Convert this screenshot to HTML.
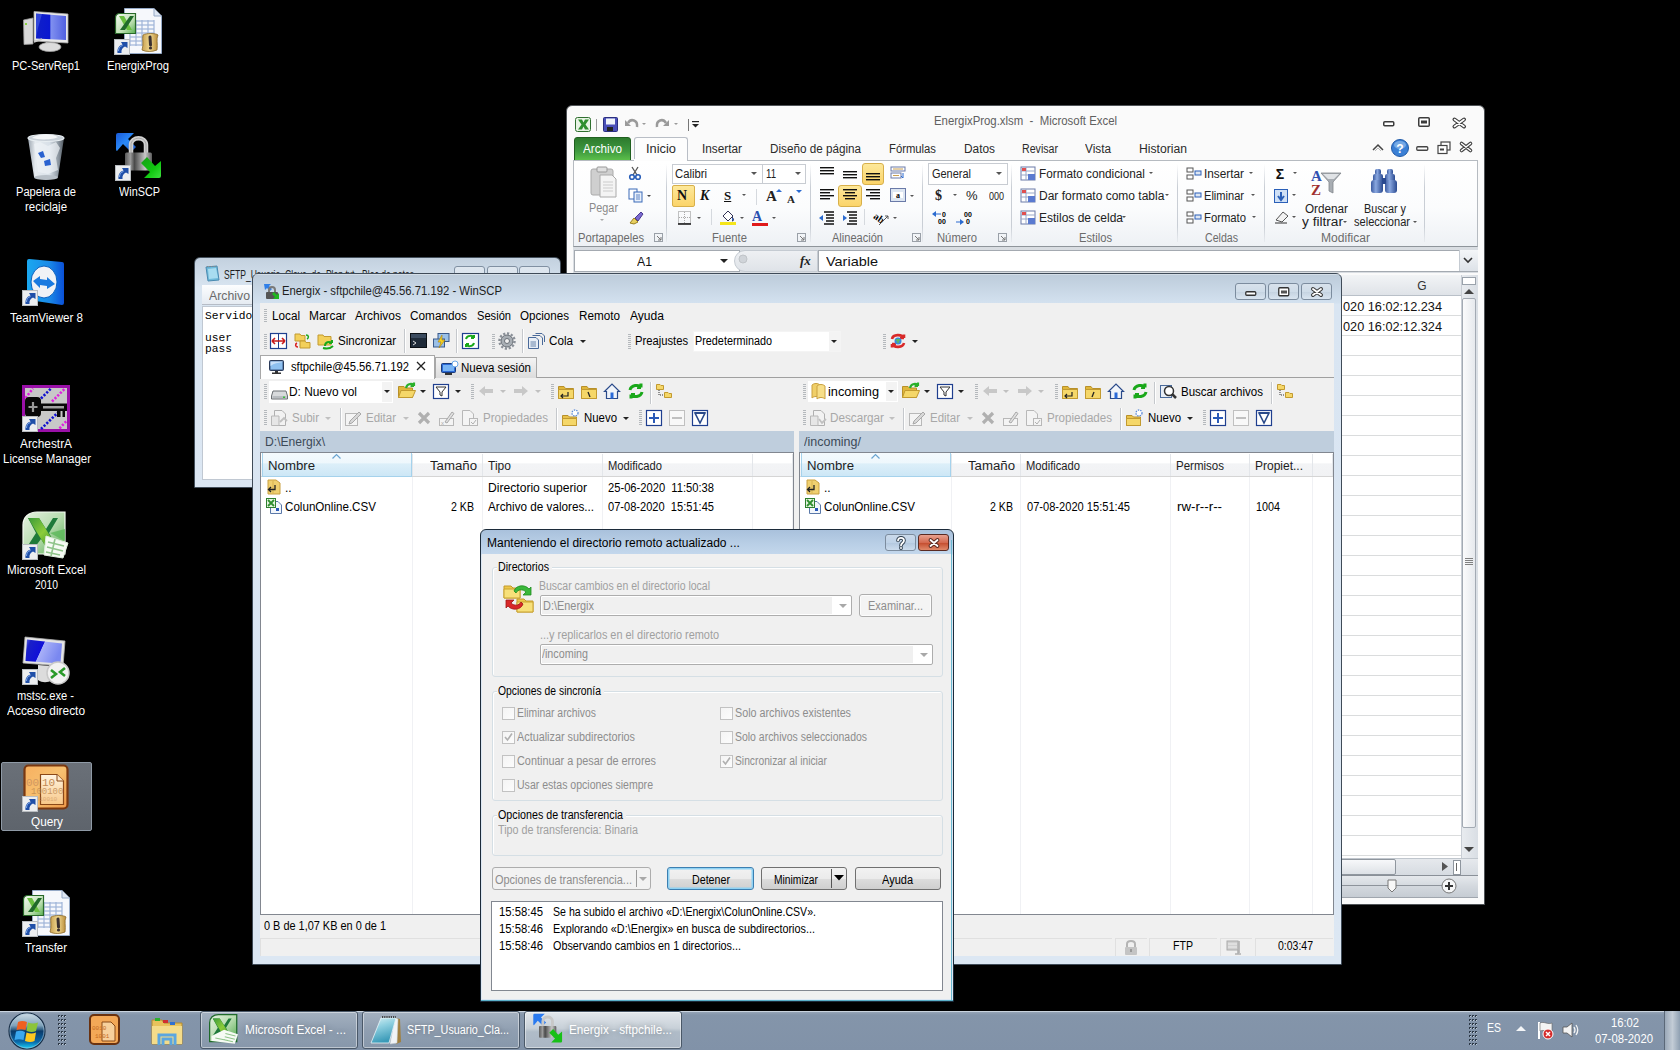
<!DOCTYPE html><html><head><meta charset="utf-8"><style>
html,body{margin:0;padding:0;background:#000;width:1680px;height:1050px;overflow:hidden;position:relative;font-family:"Liberation Sans", sans-serif;font-size:12px}
.a{position:absolute}
.t{position:absolute;white-space:pre;transform-origin:0 50%}
svg.a{overflow:visible}
</style></head><body><svg class="a" style="left:20px;top:8px;" width="52" height="46" viewBox="0 0 52 46"><defs><linearGradient id="pcscr" x1="0" y1="0" x2="1" y2="0"><stop offset="0" stop-color="#1020c8"/><stop offset="0.45" stop-color="#0a18d0"/><stop offset="0.5" stop-color="#8090f0"/><stop offset="1" stop-color="#5060e0"/></linearGradient></defs><path d="M3.5 12 L13 10 L13 36 L4 36.5Z" fill="#d8d8d8" stroke="#9a9a9a" stroke-width="0.8"/><rect x="5" y="15" width="2" height="2" fill="#8ad040"/><path d="M14 3.5 L48 6 L48 35 L14 33Z" fill="#e8e8e8" stroke="#a8a8a8" stroke-width="0.8"/><path d="M16 5.5 L46 8 L46 32 L16 30.5Z" fill="url(#pcscr)"/><path d="M18 20 L22 6 L16 6 L16 30 Z" fill="#6f8ff8" opacity="0.35"/><path d="M26 34 L36 35 L37 38 L25 37Z" fill="#cfcfcf"/><ellipse cx="30" cy="39" rx="11" ry="4.5" fill="#dcdcdc" stroke="#a0a0a0" stroke-width="0.8"/><path d="M14 34 L22 31" stroke="#ccc" stroke-width="1.5"/></svg><svg class="a" style="left:114px;top:6px;" width="48" height="50" viewBox="0 0 48 50"><defs><linearGradient id="xbd" x1="0" y1="0" x2="1" y2="1"><stop offset="0" stop-color="#f4faf2"/><stop offset="0.6" stop-color="#bfe0b4"/><stop offset="1" stop-color="#58b050"/></linearGradient><linearGradient id="scr" x1="0" y1="0" x2="1" y2="0"><stop offset="0" stop-color="#c8a050"/><stop offset="0.5" stop-color="#f0d890"/><stop offset="1" stop-color="#b88a38"/></linearGradient></defs><path d="M10.5 2.5 H40 L47.5 10 V47.5 H10.5Z" fill="#f6f8fc" stroke="#95a9c6"/><path d="M40 2.5 V10 H47.5" fill="#dfe7f3" stroke="#95a9c6"/><path d="M16 15 H40" stroke="#9fb4d8" stroke-width="1.2"/><path d="M16 19 H40" stroke="#9fb4d8" stroke-width="1.2"/><path d="M16 23 H40" stroke="#9fb4d8" stroke-width="1.2"/><path d="M16 27 H40" stroke="#9fb4d8" stroke-width="1.2"/><path d="M16 31 H40" stroke="#9fb4d8" stroke-width="1.2"/><path d="M16 35 H40" stroke="#9fb4d8" stroke-width="1.2"/><path d="M16 39 H40" stroke="#9fb4d8" stroke-width="1.2"/><path d="M16 14 V40" stroke="#9fb4d8" stroke-width="1.2"/><path d="M22 14 V40" stroke="#9fb4d8" stroke-width="1.2"/><path d="M28 14 V40" stroke="#9fb4d8" stroke-width="1.2"/><path d="M34 14 V40" stroke="#9fb4d8" stroke-width="1.2"/><path d="M40 14 V40" stroke="#9fb4d8" stroke-width="1.2"/><path d="M1.5 12 Q1.5 7.5 6 7.5 H21.5 V27.5 H1.5Z" fill="url(#xbd)" stroke="#2a6a2a" stroke-width="1.2"/><path d="M5 10 H10 L18 24 H13Z" fill="#6ac040"/><path d="M16 10 H20 L11 24 H6Z" fill="#1f6a2a"/><path d="M29 29 C32 27 42 27 44 29 C42 33 44 38 43 44 C38 46 32 46 28 44 C30 38 28 33 29 29Z" fill="url(#scr)" stroke="#8a6a2a" stroke-width="0.8"/><path d="M36 31 L36.5 39" stroke="#3a3030" stroke-width="3" stroke-linecap="round"/><circle cx="36.5" cy="42" r="1.6" fill="#3a3030"/></svg><svg class="a" style="left:114px;top:39px;" width="16" height="16" viewBox="0 0 16 16"><rect x="0.5" y="0.5" width="15" height="15" fill="#eceef0" stroke="#b8bcc0"/><path d="M3.5 14 C3 9.5 5 6.5 8.5 5.5 L7 3 H13.5 V9 L11 7.5 C8.5 8.5 7 11 7.5 14Z" fill="#1f4fa8"/><path d="M4.5 12 C4.5 9 6 7 8.5 6.5" stroke="#7fa8e8" stroke-width="1" fill="none"/></svg><svg class="a" style="left:26px;top:132px;" width="40" height="50" viewBox="0 0 40 50"><defs><linearGradient id="rbg" x1="0" y1="0" x2="1" y2="0"><stop offset="0" stop-color="#9aa4ae"/><stop offset="0.2" stop-color="#e6ebf0"/><stop offset="0.6" stop-color="#d8e0e8"/><stop offset="0.85" stop-color="#8a949e"/><stop offset="1" stop-color="#505860"/></linearGradient></defs><path d="M2 6 L8 45 C12 48 28 48 32 45 L38 6Z" fill="url(#rbg)"/><path d="M8 12 L14 10 L22 14 L30 10 L34 16 L30 26 L32 38 L22 42 L12 40 L10 26Z" fill="#eef2f6" opacity="0.7"/><ellipse cx="20" cy="6" rx="18" ry="3.5" fill="#c8d0d8" stroke="#e8eef2" stroke-width="1.2"/><path d="M6 6 C10 2 26 1 32 5 C28 8 12 8 6 6Z" fill="#f4f6f8"/><ellipse cx="20" cy="45.5" rx="12" ry="2.5" fill="#b8c0c8"/><path d="M12 21 L17 19 L19 25 L15 26Z M18 29 L24 27 L25 33 L19 34Z" fill="#2a62d0"/></svg><svg class="a" style="left:114px;top:132px;" width="50" height="50" viewBox="0 0 50 50"><defs><linearGradient id="wsbody" x1="0" y1="0" x2="1" y2="0"><stop offset="0" stop-color="#5a5a5a"/><stop offset="0.2" stop-color="#9a9a9a"/><stop offset="0.35" stop-color="#4a4a4a"/><stop offset="0.55" stop-color="#8a8a8a"/><stop offset="0.75" stop-color="#c8c8c8"/><stop offset="1" stop-color="#5a5a5a"/></linearGradient><linearGradient id="wsblue" x1="0" y1="0" x2="1" y2="1"><stop offset="0" stop-color="#1a5ad8"/><stop offset="0.5" stop-color="#2a8af8"/><stop offset="1" stop-color="#1a4ab8"/></linearGradient><linearGradient id="wsgreen" x1="0" y1="0" x2="1" y2="1"><stop offset="0" stop-color="#1a9a1a"/><stop offset="0.6" stop-color="#10c810"/><stop offset="1" stop-color="#40e040"/></linearGradient></defs><path d="M2 3 Q2 1 4 1 H20 L14 7 L22 15 L17 20 L9 12 L3 19 Q2 19 2 17Z" fill="url(#wsblue)"/><path d="M17 21 V13 C17 4 32 4 32 13 V21" fill="none" stroke="#d0d0d0" stroke-width="4.5"/><path d="M17 21 V13 C17 4 32 4 32 13 V21" fill="none" stroke="#8a8a8a" stroke-width="1" opacity="0.6"/><rect x="11" y="20.5" width="27" height="18" rx="1.5" fill="url(#wsbody)"/><path d="M47 29 V44 Q47 46 45 46 H30 L36 40 L27 31 L33 25 L41 34Z" fill="url(#wsgreen)"/></svg><svg class="a" style="left:115px;top:165px;" width="16" height="16" viewBox="0 0 16 16"><rect x="0.5" y="0.5" width="15" height="15" fill="#eceef0" stroke="#b8bcc0"/><path d="M3.5 14 C3 9.5 5 6.5 8.5 5.5 L7 3 H13.5 V9 L11 7.5 C8.5 8.5 7 11 7.5 14Z" fill="#1f4fa8"/><path d="M4.5 12 C4.5 9 6 7 8.5 6.5" stroke="#7fa8e8" stroke-width="1" fill="none"/></svg><svg class="a" style="left:24px;top:258px;" width="42" height="48" viewBox="0 0 42 48"><defs><linearGradient id="tvb" x1="0" y1="0" x2="1" y2="0"><stop offset="0" stop-color="#1aa8f0"/><stop offset="0.6" stop-color="#1a8ae8"/><stop offset="1" stop-color="#0a50d8"/></linearGradient></defs><path d="M3 3 Q3 1 5 1 L38 4 Q40 4 40 6 V45 Q40 47 38 47 L5 42 Q3 42 3 40Z" fill="url(#tvb)"/><ellipse cx="20" cy="24" rx="13" ry="16" fill="#f0f2f6" stroke="#0a60c0" stroke-width="1"/><path d="M9 23 L16 18 V21 L23 22 V19 L31 26 L23 31 V28 L16 27 V30Z" fill="#1a7ae0"/></svg><svg class="a" style="left:22px;top:290px;" width="16" height="16" viewBox="0 0 16 16"><rect x="0.5" y="0.5" width="15" height="15" fill="#eceef0" stroke="#b8bcc0"/><path d="M3.5 14 C3 9.5 5 6.5 8.5 5.5 L7 3 H13.5 V9 L11 7.5 C8.5 8.5 7 11 7.5 14Z" fill="#1f4fa8"/><path d="M4.5 12 C4.5 9 6 7 8.5 6.5" stroke="#7fa8e8" stroke-width="1" fill="none"/></svg><svg class="a" style="left:22px;top:385px;" width="48" height="47" viewBox="0 0 48 47"><rect x="1.5" y="1.5" width="45" height="44" fill="#c8c8c8" stroke="#9a10a8" stroke-width="3"/><g stroke-width="2.6" stroke-dasharray="2.2 1.6" stroke-linecap="butt"><path d="M3.5 13 L11 3.5 M30 16.5 L43 3.5 M17 26 L21 22 M37.5 43.5 L45 35.5" stroke="#e020e0"/><path d="M19 13.5 L29 3.5 M19 44 L36 27.5" stroke="#1010d0"/></g><rect x="3" y="12" width="16" height="20" rx="4" fill="#080808"/><path d="M11 17 V27 M6.5 22 H15.5" stroke="#9a9a9a" stroke-width="2.2"/><rect x="18" y="18.5" width="27" height="7.5" fill="#080808"/><rect x="21" y="21" width="21" height="2.5" fill="#a0a0a0"/><rect x="35" y="25" width="8" height="7" fill="#080808"/><rect x="38.5" y="26" width="2" height="6" fill="#c8c8c8"/></svg><svg class="a" style="left:22px;top:416px;" width="16" height="16" viewBox="0 0 16 16"><rect x="0.5" y="0.5" width="15" height="15" fill="#eceef0" stroke="#b8bcc0"/><path d="M3.5 14 C3 9.5 5 6.5 8.5 5.5 L7 3 H13.5 V9 L11 7.5 C8.5 8.5 7 11 7.5 14Z" fill="#1f4fa8"/><path d="M4.5 12 C4.5 9 6 7 8.5 6.5" stroke="#7fa8e8" stroke-width="1" fill="none"/></svg><svg class="a" style="left:22px;top:511px;" width="46" height="46" viewBox="0 0 46 46"><defs><linearGradient id="xlbg" x1="0" y1="0" x2="1" y2="1"><stop offset="0" stop-color="#e6f2e2"/><stop offset="0.5" stop-color="#b8dcb0"/><stop offset="1" stop-color="#4faa4a"/></linearGradient><linearGradient id="xlx" x1="0" y1="0" x2="1" y2="1"><stop offset="0" stop-color="#3a9a3a"/><stop offset="0.5" stop-color="#8ccc3a"/><stop offset="1" stop-color="#2a8a2a"/></linearGradient></defs><path d="M1 14 C1 6 7 1 15 1 H43 V43 H1Z" fill="url(#xlbg)" stroke="#f4fbf2" stroke-width="1.2"/><path d="M28 22 L43 18 V30Z" fill="#5cb85a" opacity="0.8"/><path d="M6 7 H17 L24 18 L31 7 H36 L27 22 L35 36 H24 L19 28 L13 36 H5 L14 22Z" fill="#1f7a3a"/><path d="M6 7 H17 L35 36 H24Z" fill="url(#xlx)"/><path d="M24 25 L46 32 L41 47 L22 44Z" fill="#f6fbf4" stroke="#dfeedd"/><path d="M26 31 L42 35 M25 36 L41 40 M24 41 L38 44 M33 28 L29 45" stroke="#8fc48a" stroke-width="1.6"/></svg><svg class="a" style="left:22px;top:544px;" width="16" height="16" viewBox="0 0 16 16"><rect x="0.5" y="0.5" width="15" height="15" fill="#eceef0" stroke="#b8bcc0"/><path d="M3.5 14 C3 9.5 5 6.5 8.5 5.5 L7 3 H13.5 V9 L11 7.5 C8.5 8.5 7 11 7.5 14Z" fill="#1f4fa8"/><path d="M4.5 12 C4.5 9 6 7 8.5 6.5" stroke="#7fa8e8" stroke-width="1" fill="none"/></svg><svg class="a" style="left:22px;top:636px;" width="48" height="52" viewBox="0 0 48 52"><defs><linearGradient id="msscr" x1="0" y1="0" x2="1" y2="0.3"><stop offset="0" stop-color="#6a70e0"/><stop offset="0.15" stop-color="#1a20c8"/><stop offset="0.5" stop-color="#1010d8"/><stop offset="0.52" stop-color="#a8b0f8"/><stop offset="1" stop-color="#7a88f0"/></linearGradient></defs><path d="M3 1 L43 5 L41 30 L1 27Z" fill="#e4e4e4" stroke="#b0b0b0" stroke-width="0.8"/><path d="M5 3.5 L40 7.5 L38.5 27.5 L3.5 25Z" fill="url(#msscr)"/><path d="M16 29 L30 30 V44 C26 47 20 47 16 44Z" fill="#dcdcdc"/><circle cx="36" cy="37" r="11" fill="#f2f2f2" stroke="#c8c8c8" stroke-width="1.5"/><path d="M29 34 L34 38 L29 42 M43 32 L38 36 L43 40" stroke="#2a9a2a" stroke-width="2.6" fill="none"/></svg><svg class="a" style="left:22px;top:669px;" width="16" height="16" viewBox="0 0 16 16"><rect x="0.5" y="0.5" width="15" height="15" fill="#eceef0" stroke="#b8bcc0"/><path d="M3.5 14 C3 9.5 5 6.5 8.5 5.5 L7 3 H13.5 V9 L11 7.5 C8.5 8.5 7 11 7.5 14Z" fill="#1f4fa8"/><path d="M4.5 12 C4.5 9 6 7 8.5 6.5" stroke="#7fa8e8" stroke-width="1" fill="none"/></svg><div class="a" style="left:1px;top:762px;width:91px;height:69px;background:linear-gradient(#6a7078,#5e646c);border:1px solid #8f9aa6;box-sizing:border-box;border-radius:2px"></div><svg class="a" style="left:22px;top:763px;" width="48" height="48" viewBox="0 0 48 48"><defs><linearGradient id="qbg" x1="0" y1="0" x2="1" y2="1"><stop offset="0" stop-color="#f8b060"/><stop offset="0.5" stop-color="#f6c070"/><stop offset="1" stop-color="#ee9848"/></linearGradient><linearGradient id="qpp" x1="0" y1="0" x2="0" y2="1"><stop offset="0" stop-color="#fff4e0"/><stop offset="1" stop-color="#f8c888"/></linearGradient></defs><rect x="2.5" y="2.5" width="43" height="43" rx="4" fill="url(#qbg)" stroke="#7a3810" stroke-width="2.2"/><text x="4" y="23" font-size="11" fill="#c89060" font-family="Liberation Mono" opacity="0.8">0010</text><path d="M18.5 11.5 H35 L41.5 18 V41.5 H18.5Z" fill="url(#qpp)" stroke="#8a4818" stroke-width="1.2"/><path d="M35 11.5 V18 H41.5" fill="#fde8c8" stroke="#8a4818" stroke-width="1"/><text x="20" y="23" font-size="11" fill="#b87840" font-family="Liberation Mono" opacity="0.85">10</text><text x="9" y="31" font-size="9" fill="#c08a50" font-family="Liberation Mono" opacity="0.8">100100</text><text x="10" y="38" font-size="6" fill="#c89060" font-family="Liberation Mono" opacity="0.6">0010010</text></svg><svg class="a" style="left:22px;top:796px;" width="16" height="16" viewBox="0 0 16 16"><rect x="0.5" y="0.5" width="15" height="15" fill="#eceef0" stroke="#b8bcc0"/><path d="M3.5 14 C3 9.5 5 6.5 8.5 5.5 L7 3 H13.5 V9 L11 7.5 C8.5 8.5 7 11 7.5 14Z" fill="#1f4fa8"/><path d="M4.5 12 C4.5 9 6 7 8.5 6.5" stroke="#7fa8e8" stroke-width="1" fill="none"/></svg><svg class="a" style="left:22px;top:888px;" width="48" height="50" viewBox="0 0 48 50"><defs><linearGradient id="xbd" x1="0" y1="0" x2="1" y2="1"><stop offset="0" stop-color="#f4faf2"/><stop offset="0.6" stop-color="#bfe0b4"/><stop offset="1" stop-color="#58b050"/></linearGradient><linearGradient id="scr" x1="0" y1="0" x2="1" y2="0"><stop offset="0" stop-color="#c8a050"/><stop offset="0.5" stop-color="#f0d890"/><stop offset="1" stop-color="#b88a38"/></linearGradient></defs><path d="M10.5 2.5 H40 L47.5 10 V47.5 H10.5Z" fill="#f6f8fc" stroke="#95a9c6"/><path d="M40 2.5 V10 H47.5" fill="#dfe7f3" stroke="#95a9c6"/><path d="M16 15 H40" stroke="#9fb4d8" stroke-width="1.2"/><path d="M16 19 H40" stroke="#9fb4d8" stroke-width="1.2"/><path d="M16 23 H40" stroke="#9fb4d8" stroke-width="1.2"/><path d="M16 27 H40" stroke="#9fb4d8" stroke-width="1.2"/><path d="M16 31 H40" stroke="#9fb4d8" stroke-width="1.2"/><path d="M16 35 H40" stroke="#9fb4d8" stroke-width="1.2"/><path d="M16 39 H40" stroke="#9fb4d8" stroke-width="1.2"/><path d="M16 14 V40" stroke="#9fb4d8" stroke-width="1.2"/><path d="M22 14 V40" stroke="#9fb4d8" stroke-width="1.2"/><path d="M28 14 V40" stroke="#9fb4d8" stroke-width="1.2"/><path d="M34 14 V40" stroke="#9fb4d8" stroke-width="1.2"/><path d="M40 14 V40" stroke="#9fb4d8" stroke-width="1.2"/><path d="M1.5 12 Q1.5 7.5 6 7.5 H21.5 V27.5 H1.5Z" fill="url(#xbd)" stroke="#2a6a2a" stroke-width="1.2"/><path d="M5 10 H10 L18 24 H13Z" fill="#6ac040"/><path d="M16 10 H20 L11 24 H6Z" fill="#1f6a2a"/><path d="M29 29 C32 27 42 27 44 29 C42 33 44 38 43 44 C38 46 32 46 28 44 C30 38 28 33 29 29Z" fill="url(#scr)" stroke="#8a6a2a" stroke-width="0.8"/><path d="M36 31 L36.5 39" stroke="#3a3030" stroke-width="3" stroke-linecap="round"/><circle cx="36.5" cy="42" r="1.6" fill="#3a3030"/></svg><svg class="a" style="left:22px;top:921px;" width="16" height="16" viewBox="0 0 16 16"><rect x="0.5" y="0.5" width="15" height="15" fill="#eceef0" stroke="#b8bcc0"/><path d="M3.5 14 C3 9.5 5 6.5 8.5 5.5 L7 3 H13.5 V9 L11 7.5 C8.5 8.5 7 11 7.5 14Z" fill="#1f4fa8"/><path d="M4.5 12 C4.5 9 6 7 8.5 6.5" stroke="#7fa8e8" stroke-width="1" fill="none"/></svg><div class="t" style="left:12.00px;top:58px;font-size:12px;line-height:16px;color:#fff;transform:scaleX(0.9186);">PC-ServRep1</div><div class="t" style="left:107.00px;top:58px;font-size:12px;line-height:16px;color:#fff;transform:scaleX(0.9389);">EnergixProg</div><div class="t" style="left:16.00px;top:184px;font-size:12px;line-height:16px;color:#fff;transform:scaleX(0.9271);">Papelera de</div><div class="t" style="left:25.00px;top:199px;font-size:12px;line-height:16px;color:#fff;transform:scaleX(0.9542);">reciclaje</div><div class="t" style="left:118.50px;top:184px;font-size:12px;line-height:16px;color:#fff;transform:scaleX(0.9043);">WinSCP</div><div class="t" style="left:9.50px;top:310px;font-size:12px;line-height:16px;color:#fff;transform:scaleX(0.9628);">TeamViewer 8</div><div class="t" style="left:20.00px;top:436px;font-size:12px;line-height:16px;color:#fff;transform:scaleX(0.9870);">ArchestrA</div><div class="t" style="left:2.50px;top:451px;font-size:12px;line-height:16px;color:#fff;transform:scaleX(0.9559);">License Manager</div><div class="t" style="left:6.50px;top:562px;font-size:12px;line-height:16px;color:#fff;transform:scaleX(0.9711);">Microsoft Excel</div><div class="t" style="left:34.50px;top:577px;font-size:12px;line-height:16px;color:#fff;transform:scaleX(0.8615);">2010</div><div class="t" style="left:17.00px;top:688px;font-size:12px;line-height:16px;color:#fff;transform:scaleX(0.9292);">mstsc.exe -</div><div class="t" style="left:6.50px;top:703px;font-size:12px;line-height:16px;color:#fff;transform:scaleX(0.9910);">Acceso directo</div><div class="t" style="left:30.50px;top:814px;font-size:12px;line-height:16px;color:#fff;transform:scaleX(0.9792);">Query</div><div class="t" style="left:24.50px;top:940px;font-size:12px;line-height:16px;color:#fff;transform:scaleX(0.9495);">Transfer</div><div class="a" style="left:566px;top:105px;width:919px;height:800px;background:#fafafa;border:1px solid #4f5357;border-radius:6px 6px 0 0;box-sizing:border-box"></div><svg class="a" style="left:575px;top:117px;" width="16" height="15" viewBox="0 0 16 15"><rect x="0.5" y="0.5" width="15" height="14" rx="2" fill="#e7f3e4" stroke="#2f6f2f"/><path d="M3 2.5 H7 L8.5 5.5 L10 2.5 H14 L10.5 7.5 L14 12.5 H10 L8.5 9.5 L7 12.5 H3 L6.5 7.5Z" fill="#2f8f2f"/></svg><div class="a" style="left:596px;top:119px;width:1px;height:12px;background:#9a9a9a"></div><svg class="a" style="left:603px;top:117px;" width="15" height="15" viewBox="0 0 15 15"><rect x="0.5" y="0.5" width="14" height="14" rx="1" fill="#4a4fb8" stroke="#2a2f80"/><rect x="3" y="1.5" width="9" height="6" fill="#f0f4fa"/><rect x="4" y="10" width="6" height="4" fill="#222"/></svg><svg class="a" style="left:625px;top:117px;" width="14" height="14" viewBox="0 0 14 14"><path d="M3 6 C6 1 13 3 12 10" stroke="#9a9a9a" stroke-width="2.5" fill="none"/><path d="M0 3 L6 9 L0 9Z" fill="#9a9a9a"/></svg><svg class="a" style="left:642px;top:123px;" width="5" height="3" viewBox="0 0 5 3"><path d="M0 0 H4 L2 2Z" fill="#9a9a9a"/></svg><svg class="a" style="left:655px;top:117px;" width="14" height="14" viewBox="0 0 14 14"><path d="M11 6 C8 1 1 3 2 10" stroke="#9a9a9a" stroke-width="2.5" fill="none"/><path d="M14 3 L8 9 L14 9Z" fill="#9a9a9a"/></svg><svg class="a" style="left:674px;top:123px;" width="5" height="3" viewBox="0 0 5 3"><path d="M0 0 H4 L2 2Z" fill="#9a9a9a"/></svg><div class="a" style="left:688px;top:119px;width:1px;height:12px;background:#777"></div><svg class="a" style="left:692px;top:119px;" width="8" height="10" viewBox="0 0 8 10"><rect x="0" y="2" width="7" height="1.2" fill="#222"/><path d="M0 5 H7 L3.5 8.5Z" fill="#222"/></svg><div class="t" style="left:934.00px;top:113px;font-size:12px;line-height:16px;color:#606060;transform:scaleX(0.9496);">EnergixProg.xlsm  -  Microsoft Excel</div><svg class="a" style="left:1383px;top:121px;" width="13" height="7" viewBox="0 0 13 7"><rect x="0.75" y="0.75" width="10" height="4" rx="1" fill="#fff" stroke="#3c3c3c" stroke-width="1.5"/></svg><svg class="a" style="left:1418px;top:117px;" width="13" height="11" viewBox="0 0 13 11"><rect x="0.75" y="0.75" width="10.5" height="8.5" rx="1" fill="#fff" stroke="#3c3c3c" stroke-width="1.5"/><rect x="3" y="3.5" width="6" height="3" fill="#3c3c3c"/></svg><svg class="a" style="left:1453px;top:118px;" width="13" height="10" viewBox="0 0 13 10"><path d="M1.5 1.5 L11 8.5 M11 1.5 L1.5 8.5" stroke="#3c3c3c" stroke-width="4" stroke-linecap="round"/><path d="M1.5 1.5 L11 8.5 M11 1.5 L1.5 8.5" stroke="#fff" stroke-width="1.6" stroke-linecap="round"/></svg><div class="a" style="left:574px;top:137px;width:57px;height:24px;background:linear-gradient(#2d7a2d,#3f9a3f 60%,#5cbf4a);border:1px solid #1f5f1f;border-radius:3px 3px 0 0;box-sizing:border-box"></div><div class="t" style="left:583.00px;top:141px;font-size:12px;line-height:16px;color:#fff;transform:scaleX(0.9746);">Archivo</div><div class="a" style="left:634px;top:137px;width:54px;height:24px;background:#fdfdfd;border:1px solid #b9bec6;border-bottom:none;border-radius:3px 3px 0 0;box-sizing:border-box"></div><div class="t" style="left:646.00px;top:141px;font-size:12px;line-height:16px;color:#2b2b2b;transform:scaleX(1.0708);">Inicio</div><div class="t" style="left:702.00px;top:141px;font-size:12px;line-height:16px;color:#2b2b2b;transform:scaleX(0.9832);">Insertar</div><div class="t" style="left:770.00px;top:141px;font-size:12px;line-height:16px;color:#2b2b2b;transform:scaleX(0.9742);">Diseño de página</div><div class="t" style="left:889.00px;top:141px;font-size:12px;line-height:16px;color:#2b2b2b;transform:scaleX(0.9398);">Fórmulas</div><div class="t" style="left:964.00px;top:141px;font-size:12px;line-height:16px;color:#2b2b2b;transform:scaleX(0.9889);">Datos</div><div class="t" style="left:1022.00px;top:141px;font-size:12px;line-height:16px;color:#2b2b2b;transform:scaleX(0.8850);">Revisar</div><div class="t" style="left:1085.00px;top:141px;font-size:12px;line-height:16px;color:#2b2b2b;transform:scaleX(0.9825);">Vista</div><div class="t" style="left:1139.00px;top:141px;font-size:12px;line-height:16px;color:#2b2b2b;transform:scaleX(1.0137);">Historian</div><svg class="a" style="left:1372px;top:143px;" width="12" height="9" viewBox="0 0 12 9"><path d="M1 7 L6 2 L11 7" stroke="#444" stroke-width="1.5" fill="none"/><path d="M3 8 L6 5 L9 8" stroke="#bbb" stroke-width="1" fill="none"/></svg><svg class="a" style="left:1391px;top:139px;" width="18" height="18" viewBox="0 0 18 18"><circle cx="9" cy="9" r="8.5" fill="#3a7fd5" stroke="#1f5aa8"/><ellipse cx="9" cy="6" rx="6" ry="4" fill="#9cc4f0" opacity="0.6"/><text x="9" y="13.5" font-size="12" font-weight="bold" fill="#fff" text-anchor="middle" font-family="Liberation Sans">?</text></svg><svg class="a" style="left:1416px;top:146px;" width="13" height="5" viewBox="0 0 13 5"><rect x="0.75" y="0.75" width="11" height="3.5" rx="1" fill="#fff" stroke="#444" stroke-width="1.3"/></svg><svg class="a" style="left:1437px;top:141px;" width="14" height="13" viewBox="0 0 14 13"><rect x="4" y="1" width="9" height="8" fill="#fff" stroke="#444" stroke-width="1.2"/><rect x="1" y="4.5" width="9" height="8" fill="#fff" stroke="#444" stroke-width="1.2"/><rect x="3" y="7.5" width="4" height="2" fill="#444"/></svg><svg class="a" style="left:1460px;top:142px;" width="12" height="10" viewBox="0 0 12 10"><path d="M1.5 1.5 L10.5 8.5 M10.5 1.5 L1.5 8.5" stroke="#444" stroke-width="3.6" stroke-linecap="round"/><path d="M1.5 1.5 L10.5 8.5 M10.5 1.5 L1.5 8.5" stroke="#fff" stroke-width="1.4" stroke-linecap="round"/></svg><div class="a" style="left:573px;top:160px;width:905px;height:87px;background:linear-gradient(#ffffff 0%,#fbfcfd 55%,#eef1f5 100%);border:1px solid #b6bbc1;border-bottom-color:#8f959b;box-sizing:border-box"></div><div class="a" style="left:634px;top:159px;width:53px;height:2px;background:#fdfdfd"></div><div class="a" style="left:666px;top:164px;width:1px;height:78px;background:linear-gradient(rgba(200,205,212,0),#c9ced5 30%,#c9ced5 80%,rgba(200,205,212,0.2))"></div><div class="a" style="left:810px;top:164px;width:1px;height:78px;background:linear-gradient(rgba(200,205,212,0),#c9ced5 30%,#c9ced5 80%,rgba(200,205,212,0.2))"></div><div class="a" style="left:922px;top:164px;width:1px;height:78px;background:linear-gradient(rgba(200,205,212,0),#c9ced5 30%,#c9ced5 80%,rgba(200,205,212,0.2))"></div><div class="a" style="left:1011px;top:164px;width:1px;height:78px;background:linear-gradient(rgba(200,205,212,0),#c9ced5 30%,#c9ced5 80%,rgba(200,205,212,0.2))"></div><div class="a" style="left:1177px;top:164px;width:1px;height:78px;background:linear-gradient(rgba(200,205,212,0),#c9ced5 30%,#c9ced5 80%,rgba(200,205,212,0.2))"></div><div class="a" style="left:1264px;top:164px;width:1px;height:78px;background:linear-gradient(rgba(200,205,212,0),#c9ced5 30%,#c9ced5 80%,rgba(200,205,212,0.2))"></div><div class="a" style="left:1424px;top:164px;width:1px;height:78px;background:linear-gradient(rgba(200,205,212,0),#c9ced5 30%,#c9ced5 80%,rgba(200,205,212,0.2))"></div><div class="t" style="left:578.00px;top:230px;font-size:12px;line-height:16px;color:#6b6b6b;transform:scaleX(0.9333);">Portapapeles</div><div class="t" style="left:711.50px;top:230px;font-size:12px;line-height:16px;color:#6b6b6b;transform:scaleX(0.9368);">Fuente</div><div class="t" style="left:831.50px;top:230px;font-size:12px;line-height:16px;color:#6b6b6b;transform:scaleX(0.9210);">Alineación</div><div class="t" style="left:937.00px;top:230px;font-size:12px;line-height:16px;color:#6b6b6b;transform:scaleX(0.9372);">Número</div><div class="t" style="left:1078.50px;top:230px;font-size:12px;line-height:16px;color:#6b6b6b;transform:scaleX(0.9336);">Estilos</div><div class="t" style="left:1204.50px;top:230px;font-size:12px;line-height:16px;color:#6b6b6b;transform:scaleX(0.8834);">Celdas</div><div class="t" style="left:1320.50px;top:230px;font-size:12px;line-height:16px;color:#6b6b6b;transform:scaleX(1.0065);">Modificar</div><svg class="a" style="left:654px;top:233px;" width="9" height="9" viewBox="0 0 9 9"><rect x="0.5" y="0.5" width="8" height="8" fill="none" stroke="#9aa0a8"/><path d="M3 3 L7 7 M7 4 V7 H4" stroke="#777" fill="none"/></svg><svg class="a" style="left:797px;top:233px;" width="9" height="9" viewBox="0 0 9 9"><rect x="0.5" y="0.5" width="8" height="8" fill="none" stroke="#9aa0a8"/><path d="M3 3 L7 7 M7 4 V7 H4" stroke="#777" fill="none"/></svg><svg class="a" style="left:912px;top:233px;" width="9" height="9" viewBox="0 0 9 9"><rect x="0.5" y="0.5" width="8" height="8" fill="none" stroke="#9aa0a8"/><path d="M3 3 L7 7 M7 4 V7 H4" stroke="#777" fill="none"/></svg><svg class="a" style="left:998px;top:233px;" width="9" height="9" viewBox="0 0 9 9"><rect x="0.5" y="0.5" width="8" height="8" fill="none" stroke="#9aa0a8"/><path d="M3 3 L7 7 M7 4 V7 H4" stroke="#777" fill="none"/></svg><svg class="a" style="left:590px;top:166px;" width="27" height="32" viewBox="0 0 27 32"><rect x="1" y="3" width="22" height="26" rx="2" fill="#cfcfcf" stroke="#aaa"/><rect x="7" y="1" width="10" height="5" rx="1" fill="#e0e0e0" stroke="#999"/><path d="M10 9 H22 L26 13 V31 H10Z" fill="#f4f4f4" stroke="#aaa"/><path d="M13 16 H23 M13 19 H23 M13 22 H23 M13 25 H23" stroke="#ccc"/></svg><div class="t" style="left:588.50px;top:200px;font-size:12px;line-height:16px;color:#8a8a8a;transform:scaleX(0.9056);">Pegar</div><svg class="a" style="left:600px;top:219px;" width="5" height="3" viewBox="0 0 5 3"><path d="M0 0 H4 L2 2Z" fill="#aaa"/></svg><svg class="a" style="left:629px;top:166px;" width="12" height="14" viewBox="0 0 12 14"><path d="M3 1 L8 9 M9 1 L4 9" stroke="#555" stroke-width="1.3"/><circle cx="3" cy="11" r="2.3" fill="none" stroke="#2a5fb8" stroke-width="1.6"/><circle cx="9" cy="11" r="2.3" fill="none" stroke="#2a5fb8" stroke-width="1.6"/></svg><svg class="a" style="left:628px;top:188px;" width="16" height="14" viewBox="0 0 16 14"><rect x="1" y="1" width="8" height="10" fill="#fff" stroke="#3a6ab8"/><rect x="6" y="4" width="8" height="10" fill="#eaf1fb" stroke="#3a6ab8"/><path d="M8 7 H12 M8 9 H12 M8 11 H12" stroke="#3a6ab8" stroke-width="0.8"/></svg><svg class="a" style="left:647px;top:195px;" width="5" height="3" viewBox="0 0 5 3"><path d="M0 0 H4 L2 2Z" fill="#444"/></svg><svg class="a" style="left:628px;top:210px;" width="16" height="14" viewBox="0 0 16 14"><path d="M2 13 L6 8 L10 12 L6 14Z" fill="#e8d060" stroke="#9a8020"/><path d="M7 8 L13 2 L15 4 L10 11Z" fill="#7a6ad0" stroke="#4a3a90"/></svg><div class="a" style="left:672px;top:164px;width:91px;height:20px;background:#fff;border:1px solid #c8ccd2;box-sizing:border-box"></div><div class="a" style="left:763px;top:164px;width:43px;height:20px;background:#fff;border:1px solid #c8ccd2;border-left:none;box-sizing:border-box"></div><div class="t" style="left:675.00px;top:166px;font-size:12px;line-height:16px;color:#222;transform:scaleX(0.9409);">Calibri</div><svg class="a" style="left:751px;top:172px;" width="7" height="4" viewBox="0 0 7 4"><path d="M0 0 H6 L3 3Z" fill="#555"/></svg><div class="t" style="left:766.00px;top:166px;font-size:12px;line-height:16px;color:#222;transform:scaleX(0.8027);">11</div><svg class="a" style="left:795px;top:172px;" width="7" height="4" viewBox="0 0 7 4"><path d="M0 0 H6 L3 3Z" fill="#555"/></svg><div class="a" style="left:672px;top:185px;width:23px;height:22px;background:linear-gradient(#fde89a,#fbd46a);border:1px solid #d8b04a;border-radius:2px;box-sizing:border-box"></div><div class="t" style="left:677.00px;top:187px;font-size:14px;line-height:18px;color:#111;font-family:'Liberation Serif', serif;font-weight:bold;">N</div><div class="t" style="left:700.00px;top:187px;font-size:14px;line-height:18px;color:#111;font-family:'Liberation Serif', serif;font-weight:bold;font-style:italic">K</div><div class="t" style="left:724.00px;top:187px;font-size:13px;line-height:17px;color:#111;font-family:'Liberation Serif', serif;font-weight:bold;text-decoration:underline">S</div><svg class="a" style="left:742px;top:194px;" width="5" height="3" viewBox="0 0 5 3"><path d="M0 0 H4 L2 2Z" fill="#555"/></svg><div class="a" style="left:756px;top:189px;width:1px;height:16px;background:#d5d9de"></div><div class="t" style="left:766.00px;top:187px;font-size:15px;line-height:19px;color:#222;font-family:'Liberation Serif', serif;font-weight:bold;">A</div><svg class="a" style="left:776px;top:189px;" width="6" height="4" viewBox="0 0 6 4"><path d="M0 3 L3 0 L6 3Z" fill="#2a6ad0"/></svg><div class="t" style="left:787.00px;top:192px;font-size:11px;line-height:14px;color:#222;font-family:'Liberation Serif', serif;font-weight:bold;">A</div><svg class="a" style="left:796px;top:190px;" width="6" height="4" viewBox="0 0 6 4"><path d="M0 0 H6 L3 3Z" fill="#2a6ad0"/></svg><svg class="a" style="left:678px;top:211px;" width="14" height="14" viewBox="0 0 14 14"><rect x="0.5" y="0.5" width="12" height="12" fill="none" stroke="#888" stroke-dasharray="1 1"/><path d="M6.5 1 V13 M1 6.5 H13" stroke="#aaa" stroke-dasharray="1 1"/><path d="M0 13 H13" stroke="#111" stroke-width="1.5"/></svg><svg class="a" style="left:697px;top:217px;" width="5" height="3" viewBox="0 0 5 3"><path d="M0 0 H4 L2 2Z" fill="#555"/></svg><div class="a" style="left:711px;top:209px;width:1px;height:16px;background:#d5d9de"></div><svg class="a" style="left:720px;top:210px;" width="16" height="16" viewBox="0 0 16 16"><path d="M3 6 L8 1 L13 6 L8 11Z" fill="#fff" stroke="#335"/><path d="M12 7 C14 9 14 11 12 11" stroke="#335" fill="#2a6ad0"/><rect x="0" y="12" width="16" height="3" fill="#f5e51a"/></svg><svg class="a" style="left:740px;top:217px;" width="5" height="3" viewBox="0 0 5 3"><path d="M0 0 H4 L2 2Z" fill="#555"/></svg><div class="t" style="left:752.00px;top:208px;font-size:14px;line-height:18px;color:#2a4fb0;font-family:'Liberation Serif', serif;font-weight:bold;">A</div><div class="a" style="left:752px;top:223px;width:16px;height:3px;background:#e01a1a"></div><svg class="a" style="left:772px;top:217px;" width="5" height="3" viewBox="0 0 5 3"><path d="M0 0 H4 L2 2Z" fill="#555"/></svg><div class="a" style="left:862px;top:163px;width:22px;height:22px;background:linear-gradient(#fde89a,#fbd46a);border:1px solid #d8b04a;border-radius:3px;box-sizing:border-box"></div><div class="a" style="left:838px;top:185px;width:24px;height:22px;background:linear-gradient(#fde89a,#fbd46a);border:1px solid #d8b04a;border-radius:3px;box-sizing:border-box"></div><svg class="a" style="left:820px;top:167px;" width="14" height="9" viewBox="0 0 14 9"><rect x="0" y="0" width="14" height="1.4" fill="#111"/><rect x="0" y="3" width="14" height="1.4" fill="#111"/><rect x="0" y="6" width="14" height="1.4" fill="#111"/></svg><svg class="a" style="left:843px;top:171px;" width="14" height="9" viewBox="0 0 14 9"><rect x="0" y="0" width="14" height="1.4" fill="#111"/><rect x="0" y="3" width="14" height="1.4" fill="#111"/><rect x="0" y="6" width="14" height="1.4" fill="#111"/></svg><svg class="a" style="left:866px;top:173px;" width="14" height="9" viewBox="0 0 14 9"><rect x="0" y="0" width="14" height="1.4" fill="#111"/><rect x="0" y="3" width="14" height="1.4" fill="#111"/><rect x="0" y="6" width="14" height="1.4" fill="#111"/></svg><svg class="a" style="left:820px;top:189px;" width="14" height="12" viewBox="0 0 14 12"><rect x="0" y="0" width="14" height="1.4" fill="#111"/><rect x="0" y="3" width="10" height="1.4" fill="#111"/><rect x="0" y="6" width="14" height="1.4" fill="#111"/><rect x="0" y="9" width="10" height="1.4" fill="#111"/></svg><svg class="a" style="left:843px;top:189px;" width="16" height="12" viewBox="0 0 16 12"><rect x="0" y="0" width="14" height="1.4" fill="#111"/><rect x="2" y="3" width="10" height="1.4" fill="#111"/><rect x="0" y="6" width="14" height="1.4" fill="#111"/><rect x="2" y="9" width="10" height="1.4" fill="#111"/></svg><svg class="a" style="left:866px;top:189px;" width="18" height="12" viewBox="0 0 18 12"><rect x="0" y="0" width="14" height="1.4" fill="#111"/><rect x="4" y="3" width="10" height="1.4" fill="#111"/><rect x="0" y="6" width="14" height="1.4" fill="#111"/><rect x="4" y="9" width="10" height="1.4" fill="#111"/></svg><svg class="a" style="left:890px;top:166px;" width="16" height="14" viewBox="0 0 16 14"><rect x="1" y="1" width="14" height="4" fill="#fff" stroke="#6a7aa8"/><rect x="1" y="7" width="10" height="5" fill="#fff" stroke="#6a7aa8"/><path d="M3 3 H13 M3 9.5 H9" stroke="#c9a050"/><path d="M13 7 V12 L11 10" stroke="#2a6ad0" fill="none"/></svg><svg class="a" style="left:890px;top:188px;" width="16" height="14" viewBox="0 0 16 14"><rect x="0.5" y="0.5" width="15" height="13" fill="#dde6f2" stroke="#6a7aa8"/><rect x="3" y="4" width="10" height="6" fill="#fff"/><text x="8" y="10" font-size="8" font-weight="bold" text-anchor="middle" font-family="Liberation Serif">a</text></svg><svg class="a" style="left:910px;top:195px;" width="5" height="3" viewBox="0 0 5 3"><path d="M0 0 H4 L2 2Z" fill="#555"/></svg><svg class="a" style="left:819px;top:211px;" width="16" height="14" viewBox="0 0 16 14"><path d="M5 1 H15 M7 4 H15 M7 7 H15 M7 10 H15 M5 13 H15" stroke="#111" stroke-width="1.5"/><path d="M0 7 L4 4 V10Z" fill="#2a6ad0"/></svg><svg class="a" style="left:842px;top:211px;" width="16" height="14" viewBox="0 0 16 14"><path d="M5 1 H15 M7 4 H15 M7 7 H15 M7 10 H15 M5 13 H15" stroke="#111" stroke-width="1.5"/><path d="M5 7 L1 4 V10Z" fill="#2a6ad0"/></svg><div class="a" style="left:864px;top:209px;width:1px;height:16px;background:#d5d9de"></div><svg class="a" style="left:873px;top:210px;" width="16" height="16" viewBox="0 0 16 16"><text x="1" y="12" font-size="10" font-weight="bold" transform="rotate(35 7 8)" font-family="Liberation Serif">ab</text><path d="M6 15 L15 6 M12 6 H15 V9" stroke="#555" fill="none"/></svg><svg class="a" style="left:893px;top:217px;" width="5" height="3" viewBox="0 0 5 3"><path d="M0 0 H4 L2 2Z" fill="#555"/></svg><div class="a" style="left:928px;top:163px;width:80px;height:22px;background:#fff;border:1px solid #c8ccd2;box-sizing:border-box"></div><div class="t" style="left:932.00px;top:166px;font-size:12px;line-height:16px;color:#222;transform:scaleX(0.9135);">General</div><svg class="a" style="left:996px;top:172px;" width="7" height="4" viewBox="0 0 7 4"><path d="M0 0 H6 L3 3Z" fill="#555"/></svg><div class="t" style="left:935.00px;top:187px;font-size:14px;line-height:18px;color:#222;font-family:'Liberation Serif', serif;font-weight:bold;">$</div><svg class="a" style="left:953px;top:194px;" width="5" height="3" viewBox="0 0 5 3"><path d="M0 0 H4 L2 2Z" fill="#555"/></svg><div class="t" style="left:966.00px;top:187px;font-size:13px;line-height:17px;color:#222;">%</div><div class="t" style="left:989.00px;top:189px;font-size:11px;line-height:14px;color:#222;transform:scaleX(0.8173);">000</div><svg class="a" style="left:931px;top:210px;" width="18" height="16" viewBox="0 0 18 16"><path d="M1 4 L5 1 V7Z" fill="#2a6ad0"/><path d="M5 4 H10" stroke="#2a6ad0"/><text x="11" y="7" font-size="7" font-family="Liberation Sans" font-weight="bold">0</text><text x="7" y="14" font-size="7" font-family="Liberation Sans" font-weight="bold">00</text></svg><svg class="a" style="left:955px;top:210px;" width="18" height="16" viewBox="0 0 18 16"><text x="9" y="7" font-size="7" font-family="Liberation Sans" font-weight="bold">00</text><text x="11" y="14" font-size="7" font-family="Liberation Sans" font-weight="bold">0</text><path d="M1 12 H6" stroke="#2a6ad0"/><path d="M9 12 L5 9 V15Z" fill="#2a6ad0"/></svg><svg class="a" style="left:1020px;top:166px;" width="16" height="16" viewBox="0 0 16 16"><rect x="1" y="1" width="14" height="13" fill="#fff" stroke="#6a7aa8"/><path d="M1 5 H15 M1 9 H15 M6 1 V14" stroke="#9aa8c8"/><rect x="2" y="2" width="4" height="3" fill="#e05050"/><rect x="8" y="8" width="7" height="6" fill="#5a7ad0"/></svg><div class="t" style="left:1039.00px;top:166px;font-size:12px;line-height:16px;color:#222;transform:scaleX(0.9809);">Formato condicional</div><svg class="a" style="left:1020px;top:188px;" width="16" height="16" viewBox="0 0 16 16"><rect x="1" y="1" width="14" height="13" fill="#fff" stroke="#6a7aa8"/><path d="M1 5 H15 M1 9 H15 M6 1 V14" stroke="#9aa8c8"/><rect x="2" y="2" width="4" height="3" fill="#e05050"/><rect x="8" y="8" width="7" height="6" fill="#5a7ad0"/></svg><div class="t" style="left:1039.00px;top:188px;font-size:12px;line-height:16px;color:#222;">Dar formato como tabla</div><svg class="a" style="left:1020px;top:210px;" width="16" height="16" viewBox="0 0 16 16"><rect x="1" y="1" width="14" height="13" fill="#fff" stroke="#6a7aa8"/><path d="M1 5 H15 M1 9 H15 M6 1 V14" stroke="#9aa8c8"/><rect x="2" y="2" width="4" height="3" fill="#e05050"/><rect x="8" y="8" width="7" height="6" fill="#5a7ad0"/></svg><div class="t" style="left:1039.00px;top:210px;font-size:12px;line-height:16px;color:#222;">Estilos de celda</div><svg class="a" style="left:1149px;top:172px;" width="5" height="3" viewBox="0 0 5 3"><path d="M0 0 H4 L2 2Z" fill="#555"/></svg><svg class="a" style="left:1165px;top:194px;" width="5" height="3" viewBox="0 0 5 3"><path d="M0 0 H4 L2 2Z" fill="#555"/></svg><svg class="a" style="left:1122px;top:216px;" width="5" height="3" viewBox="0 0 5 3"><path d="M0 0 H4 L2 2Z" fill="#555"/></svg><svg class="a" style="left:1186px;top:166px;" width="16" height="16" viewBox="0 0 16 16"><rect x="1" y="2" width="6" height="4" fill="#fff" stroke="#555"/><rect x="1" y="9" width="6" height="4" fill="#fff" stroke="#555"/><rect x="9" y="5" width="6" height="4" fill="#dde6f2" stroke="#2a5fb8"/></svg><div class="t" style="left:1204.00px;top:166px;font-size:12px;line-height:16px;color:#222;transform:scaleX(0.9832);">Insertar</div><svg class="a" style="left:1186px;top:188px;" width="16" height="16" viewBox="0 0 16 16"><rect x="1" y="2" width="6" height="4" fill="#fff" stroke="#555"/><rect x="1" y="9" width="6" height="4" fill="#fff" stroke="#555"/><rect x="9" y="5" width="6" height="4" fill="#dde6f2" stroke="#2a5fb8"/></svg><div class="t" style="left:1204.00px;top:188px;font-size:12px;line-height:16px;color:#222;transform:scaleX(0.9229);">Eliminar</div><svg class="a" style="left:1186px;top:210px;" width="16" height="16" viewBox="0 0 16 16"><rect x="1" y="2" width="6" height="4" fill="#fff" stroke="#555"/><rect x="1" y="9" width="6" height="4" fill="#fff" stroke="#555"/><rect x="9" y="5" width="6" height="4" fill="#dde6f2" stroke="#2a5fb8"/></svg><div class="t" style="left:1204.00px;top:210px;font-size:12px;line-height:16px;color:#222;transform:scaleX(0.9400);">Formato</div><svg class="a" style="left:1249px;top:172px;" width="5" height="3" viewBox="0 0 5 3"><path d="M0 0 H4 L2 2Z" fill="#555"/></svg><svg class="a" style="left:1251px;top:194px;" width="5" height="3" viewBox="0 0 5 3"><path d="M0 0 H4 L2 2Z" fill="#555"/></svg><svg class="a" style="left:1252px;top:216px;" width="5" height="3" viewBox="0 0 5 3"><path d="M0 0 H4 L2 2Z" fill="#555"/></svg><div class="t" style="left:1275.80px;top:165px;font-size:14px;line-height:18px;color:#111;font-weight:bold;">Σ</div><svg class="a" style="left:1293px;top:172px;" width="5" height="3" viewBox="0 0 5 3"><path d="M0 0 H4 L2 2Z" fill="#555"/></svg><svg class="a" style="left:1274px;top:189px;" width="13" height="15" viewBox="0 0 13 15"><rect x="0.5" y="0.5" width="13" height="13" fill="#cfe0f6" stroke="#2a5fb8"/><path d="M7 3 V10 M4 7 L7 11 L10 7" stroke="#2a5fb8" stroke-width="2" fill="none"/></svg><svg class="a" style="left:1292px;top:194px;" width="5" height="3" viewBox="0 0 5 3"><path d="M0 0 H4 L2 2Z" fill="#555"/></svg><svg class="a" style="left:1274px;top:209px;" width="16" height="15" viewBox="0 0 16 15"><path d="M2 11 L9 3 L14 7 L8 13Z" fill="#f2f2f2" stroke="#555"/><path d="M1 14 H13" stroke="#333"/></svg><svg class="a" style="left:1292px;top:216px;" width="5" height="3" viewBox="0 0 5 3"><path d="M0 0 H4 L2 2Z" fill="#555"/></svg><svg class="a" style="left:1309px;top:166px;" width="34" height="30" viewBox="0 0 34 30"><text x="2" y="15" font-size="15" font-weight="bold" fill="#3050b0" font-family="Liberation Serif">A</text><text x="2" y="29" font-size="15" font-weight="bold" fill="#a03030" font-family="Liberation Serif">Z</text><path d="M12 7 H32 L24 16 V27 L20 25 V16Z" fill="#a8adb3" stroke="#80858b" stroke-width="0.8"/><path d="M14 8 H30 L25 13 H19Z" fill="#e0e3e6"/></svg><div class="t" style="left:1304.50px;top:201px;font-size:12px;line-height:16px;color:#222;transform:scaleX(0.9768);">Ordenar</div><div class="t" style="left:1301.50px;top:214px;font-size:12px;line-height:16px;color:#222;transform:scaleX(1.1388);">y filtrar</div><svg class="a" style="left:1343px;top:221px;" width="5" height="3" viewBox="0 0 5 3"><path d="M0 0 H4 L2 2Z" fill="#555"/></svg><svg class="a" style="left:1370px;top:168px;" width="30" height="26" viewBox="0 0 30 26"><defs><linearGradient id="bino" x1="0" y1="0" x2="1" y2="0"><stop offset="0" stop-color="#3a5aa0"/><stop offset="0.4" stop-color="#8aa8e0"/><stop offset="1" stop-color="#2a4a90"/></linearGradient></defs><rect x="5" y="1" width="6" height="6" rx="2" fill="url(#bino)"/><rect x="17" y="1" width="6" height="6" rx="2" fill="url(#bino)"/><rect x="3" y="6" width="10" height="8" rx="2" fill="url(#bino)"/><rect x="15" y="6" width="10" height="8" rx="2" fill="url(#bino)"/><rect x="1" y="12" width="12" height="13" rx="3" fill="url(#bino)"/><rect x="15" y="12" width="12" height="13" rx="3" fill="url(#bino)"/><rect x="12" y="10" width="4" height="6" fill="#2a4a90"/></svg><div class="t" style="left:1364.00px;top:201px;font-size:12px;line-height:16px;color:#222;transform:scaleX(0.8997);">Buscar y</div><div class="t" style="left:1354.00px;top:214px;font-size:12px;line-height:16px;color:#222;transform:scaleX(0.9226);">seleccionar</div><svg class="a" style="left:1413px;top:221px;" width="5" height="3" viewBox="0 0 5 3"><path d="M0 0 H4 L2 2Z" fill="#555"/></svg><div class="a" style="left:573px;top:247px;width:905px;height:26px;background:#d9dde2"></div><div class="a" style="left:574px;top:250px;width:166px;height:22px;background:#fff;border:1px solid #a4aab1;box-sizing:border-box"></div><div class="t" style="left:636.50px;top:253px;font-size:13px;line-height:17px;color:#111;transform:scaleX(0.9433);">A1</div><svg class="a" style="left:720px;top:259px;" width="9" height="5" viewBox="0 0 9 5"><path d="M0 0 H8 L4 4Z" fill="#222"/></svg><div class="a" style="left:734px;top:250px;width:84px;height:22px;background:linear-gradient(#eef0f3,#dfe3e8);border:1px solid #c5cbd2;border-radius:11px 0 0 11px;box-sizing:border-box"></div><svg class="a" style="left:738px;top:254px;" width="10" height="10" viewBox="0 0 10 10"><circle cx="5" cy="5" r="4" fill="#d0d4d9" stroke="#c0c4c8"/></svg><div class="t" style="left:800.00px;top:252px;font-size:13px;line-height:17px;color:#222;font-family:'Liberation Serif', serif;font-weight:bold;font-style:italic">fx</div><div class="a" style="left:818px;top:250px;width:660px;height:22px;background:#fff;border:1px solid #a4aab1;box-sizing:border-box"></div><div class="t" style="left:826.00px;top:253px;font-size:13px;line-height:17px;color:#111;transform:scaleX(1.1128);">Variable</div><div class="a" style="left:1459px;top:250px;width:18px;height:21px;background:linear-gradient(#f4f6f8,#dde2e8);border-left:1px solid #c5cbd2"></div><svg class="a" style="left:1463px;top:257px;" width="10" height="7" viewBox="0 0 10 7"><path d="M1 1 L5 5 L9 1" stroke="#333" stroke-width="1.6" fill="none"/></svg><div class="a" style="left:1335px;top:275px;width:143px;height:623px;background:#fff"></div><div class="a" style="left:1335px;top:275px;width:126px;height:21px;background:linear-gradient(#f2f4f6,#dfe3e8);border-bottom:1px solid #b9c0c8;box-sizing:border-box"></div><div class="t" style="left:1417.33px;top:278px;font-size:12px;line-height:16px;color:#333;">G</div><svg class="a" style="left:1335px;top:295px;" width="126" height="580" viewBox="0 0 126 580"><rect x="0" y="20" width="126" height="1" fill="#dadcdd"/><rect x="0" y="40" width="126" height="1" fill="#dadcdd"/><rect x="0" y="60" width="126" height="1" fill="#dadcdd"/><rect x="0" y="80" width="126" height="1" fill="#dadcdd"/><rect x="0" y="100" width="126" height="1" fill="#dadcdd"/><rect x="0" y="120" width="126" height="1" fill="#dadcdd"/><rect x="0" y="140" width="126" height="1" fill="#dadcdd"/><rect x="0" y="160" width="126" height="1" fill="#dadcdd"/><rect x="0" y="180" width="126" height="1" fill="#dadcdd"/><rect x="0" y="200" width="126" height="1" fill="#dadcdd"/><rect x="0" y="220" width="126" height="1" fill="#dadcdd"/><rect x="0" y="240" width="126" height="1" fill="#dadcdd"/><rect x="0" y="260" width="126" height="1" fill="#dadcdd"/><rect x="0" y="280" width="126" height="1" fill="#dadcdd"/><rect x="0" y="300" width="126" height="1" fill="#dadcdd"/><rect x="0" y="320" width="126" height="1" fill="#dadcdd"/><rect x="0" y="340" width="126" height="1" fill="#dadcdd"/><rect x="0" y="360" width="126" height="1" fill="#dadcdd"/><rect x="0" y="380" width="126" height="1" fill="#dadcdd"/><rect x="0" y="400" width="126" height="1" fill="#dadcdd"/><rect x="0" y="420" width="126" height="1" fill="#dadcdd"/><rect x="0" y="440" width="126" height="1" fill="#dadcdd"/><rect x="0" y="460" width="126" height="1" fill="#dadcdd"/><rect x="0" y="480" width="126" height="1" fill="#dadcdd"/><rect x="0" y="500" width="126" height="1" fill="#dadcdd"/><rect x="0" y="520" width="126" height="1" fill="#dadcdd"/><rect x="0" y="540" width="126" height="1" fill="#dadcdd"/><rect x="0" y="560" width="126" height="1" fill="#dadcdd"/></svg><div class="t" style="left:1343.00px;top:299px;font-size:12px;line-height:16px;color:#111;transform:scaleX(1.0596);">020 16:02:12.234</div><div class="t" style="left:1343.00px;top:319px;font-size:12px;line-height:16px;color:#111;transform:scaleX(1.0596);">020 16:02:12.324</div><div class="a" style="left:1461px;top:275px;width:17px;height:584px;background:linear-gradient(90deg,#e8ebef,#d9dee4);border-left:1px solid #c9ced5;box-sizing:border-box"></div><div class="a" style="left:1462px;top:277px;width:14px;height:8px;background:#fff;border:1px solid #9aa2ab;box-sizing:border-box"></div><svg class="a" style="left:1464px;top:289px;" width="10" height="6" viewBox="0 0 10 6"><path d="M0 5 L5 0 L10 5Z" fill="#444"/></svg><div class="a" style="left:1462px;top:298px;width:14px;height:530px;background:linear-gradient(90deg,#fbfbfc,#e6e9ed);border:1px solid #a3aab3;border-radius:2px;box-sizing:border-box"></div><svg class="a" style="left:1465px;top:558px;" width="8" height="8" viewBox="0 0 8 8"><path d="M0 0.5 H8 M0 2.5 H8 M0 4.5 H8 M0 6.5 H8" stroke="#808080"/></svg><svg class="a" style="left:1464px;top:847px;" width="10" height="6" viewBox="0 0 10 6"><path d="M0 0 L10 0 L5 5Z" fill="#444"/></svg><div class="a" style="left:1335px;top:858px;width:143px;height:18px;background:linear-gradient(#e6e9ed,#d6dbe1);border-top:1px solid #c0c6cd;border-bottom:1px solid #8a9098;box-sizing:border-box"></div><div class="a" style="left:1335px;top:859px;width:61px;height:16px;background:linear-gradient(#f7f8fa,#dde1e6);border:1px solid #8f969e;border-radius:0 2px 2px 0;box-sizing:border-box"></div><svg class="a" style="left:1442px;top:862px;" width="6" height="9" viewBox="0 0 6 9"><path d="M0 0 L6 4.5 L0 9Z" fill="#555"/></svg><div class="a" style="left:1453px;top:860px;width:8px;height:15px;background:#fff;border:1px solid #8f969e;box-sizing:border-box"></div><div class="a" style="left:1456px;top:863px;width:1px;height:8px;background:#666"></div><div class="a" style="left:1335px;top:876px;width:143px;height:22px;background:linear-gradient(#e5e8ec,#d3d8de 50%,#c6ccd3);border-bottom:1px solid #a0a6ae;box-sizing:border-box"></div><div class="a" style="left:1335px;top:885px;width:110px;height:1px;background:#8d939b"></div><svg class="a" style="left:1387px;top:879px;" width="10" height="14" viewBox="0 0 10 14"><path d="M1 1 H9 V9 L5 13 L1 9Z" fill="#f8f8f8" stroke="#777"/></svg><svg class="a" style="left:1441px;top:878px;" width="16" height="16" viewBox="0 0 16 16"><circle cx="8" cy="8" r="7" fill="#f6f7f8" stroke="#777"/><path d="M4 8 H12 M8 4 V12" stroke="#333" stroke-width="2"/></svg><div class="a" style="left:194px;top:257px;width:367px;height:231px;background:linear-gradient(#c3d1df,#d9e5f1 30px,#dce7f3);border:1px solid #44505c;border-radius:6px 6px 0 0;box-sizing:border-box"></div><svg class="a" style="left:204px;top:265px;" width="16" height="17" viewBox="0 0 16 17"><path d="M2 2 L13 1 L15 15 L4 16Z" fill="#6fbada" stroke="#4a8ab0"/><path d="M4 4 L12 3 L14 13 L5 14Z" fill="#a8dcf0"/><path d="M3 1.5 H13" stroke="#888" stroke-dasharray="1 1"/></svg><div class="t" style="left:224.00px;top:267px;font-size:12px;line-height:16px;color:#1e1e1e;transform:scaleX(0.7139);">SFTP_Usuario_Clave_de_Plan.txt - Bloc de notas</div><div class="a" style="left:454px;top:266px;width:31px;height:17px;background:linear-gradient(rgba(255,255,255,0.4),rgba(255,255,255,0.1));border:1px solid #8090a2;border-radius:3px;box-sizing:border-box"></div><div class="a" style="left:487px;top:266px;width:31px;height:17px;background:linear-gradient(rgba(255,255,255,0.4),rgba(255,255,255,0.1));border:1px solid #8090a2;border-radius:3px;box-sizing:border-box"></div><div class="a" style="left:519px;top:266px;width:31px;height:17px;background:linear-gradient(rgba(255,255,255,0.4),rgba(255,255,255,0.1));border:1px solid #8090a2;border-radius:3px;box-sizing:border-box"></div><div class="a" style="left:202px;top:285px;width:351px;height:20px;background:linear-gradient(#fcfdfe,#e5ebf2);border-bottom:1px solid #b6bcc6;box-sizing:border-box"></div><div class="t" style="left:209.00px;top:288px;font-size:12px;line-height:16px;color:#6a6a6a;transform:scaleX(1.0246);">Archivo</div><div class="a" style="left:202px;top:306px;width:351px;height:174px;background:#fff;border:1px solid #c0c8d2;box-sizing:border-box"></div><div class="t" style="left:205.00px;top:309px;font-size:11px;line-height:14px;color:#000;font-family:'Liberation Mono', monospace;transform:scaleX(1.0226);">Servidor</div><div class="t" style="left:205.00px;top:331px;font-size:11px;line-height:14px;color:#000;font-family:'Liberation Mono', monospace;transform:scaleX(1.0226);">user</div><div class="t" style="left:205.00px;top:342px;font-size:11px;line-height:14px;color:#000;font-family:'Liberation Mono', monospace;transform:scaleX(1.0226);">pass</div><div class="a" style="left:252px;top:273px;width:1090px;height:692px;background:linear-gradient(#bccbda 0px,#d3e1ef 29px,#d9e5f2 30px,#dce7f3 100%);border:1px solid #3f4b58;border-radius:6px 6px 0 0;box-sizing:border-box"></div><div class="a" style="left:253px;top:274px;width:1088px;height:1px;background:rgba(255,255,255,0.35)"></div><svg class="a" style="left:263px;top:283px;" width="17" height="17" viewBox="0 0 17 17"><path d="M1 1 H8 L6 3 L9 6 L7 8 L4 5 L2 7Z" fill="#2f7fe8"/><path d="M6 9 V7 C6 3 12 3 12 7 V9" fill="none" stroke="#7a7a7a" stroke-width="2"/><rect x="3" y="9" width="12" height="7" rx="1" fill="#555"/><path d="M16 16 H10 L12 14 L9 11 L11 9 L14 12 L16 10Z" fill="#1fb81f"/></svg><div class="t" style="left:282.00px;top:283px;font-size:12px;line-height:16px;color:#1e1e1e;transform:scaleX(0.9416);">Energix - sftpchile@45.56.71.192 - WinSCP</div><div class="a" style="left:1235px;top:283px;width:31px;height:17px;background:linear-gradient(rgba(255,255,255,0.35),rgba(255,255,255,0.1) 50%,rgba(0,0,0,0.03) 51%,rgba(255,255,255,0.2));border:1px solid #7c8c9e;border-radius:3px;box-sizing:border-box"></div><svg class="a" style="left:1244.5px;top:290.5px;" width="12" height="5" viewBox="0 0 12 5"><rect x="0.75" y="0.75" width="10" height="3.5" rx="1" fill="#fff" stroke="#333" stroke-width="1.3"/></svg><div class="a" style="left:1268px;top:283px;width:31px;height:17px;background:linear-gradient(rgba(255,255,255,0.35),rgba(255,255,255,0.1) 50%,rgba(0,0,0,0.03) 51%,rgba(255,255,255,0.2));border:1px solid #7c8c9e;border-radius:3px;box-sizing:border-box"></div><svg class="a" style="left:1277.5px;top:286.5px;" width="12" height="10" viewBox="0 0 12 10"><rect x="0.75" y="0.75" width="10" height="8" rx="1" fill="#fff" stroke="#333" stroke-width="1.3"/><rect x="3" y="3.5" width="6" height="3" fill="#555"/></svg><div class="a" style="left:1301px;top:283px;width:31px;height:17px;background:linear-gradient(rgba(255,255,255,0.35),rgba(255,255,255,0.1) 50%,rgba(0,0,0,0.03) 51%,rgba(255,255,255,0.2));border:1px solid #7c8c9e;border-radius:3px;box-sizing:border-box"></div><svg class="a" style="left:1309.5px;top:286.5px;" width="14" height="10" viewBox="0 0 14 10"><path d="M3 2 L11 8 M11 2 L3 8" stroke="#3a3a3a" stroke-width="4" stroke-linecap="round"/><path d="M3 2 L11 8 M11 2 L3 8" stroke="#fff" stroke-width="1.9" stroke-linecap="round"/></svg><div class="a" style="left:260px;top:303px;width:1074px;height:653px;background:#f0f0f0"></div><svg class="a" style="left:264px;top:309px;" width="3" height="14" viewBox="0 0 3 14"><rect x="0" y="0" width="3" height="1" fill="#b4b8bc"/><rect x="0" y="2" width="3" height="1" fill="#b4b8bc"/><rect x="0" y="4" width="3" height="1" fill="#b4b8bc"/><rect x="0" y="6" width="3" height="1" fill="#b4b8bc"/><rect x="0" y="8" width="3" height="1" fill="#b4b8bc"/><rect x="0" y="10" width="3" height="1" fill="#b4b8bc"/><rect x="0" y="12" width="3" height="1" fill="#b4b8bc"/></svg><div class="t" style="left:272.00px;top:308px;font-size:12px;line-height:16px;color:#000;transform:scaleX(0.9760);">Local</div><div class="t" style="left:309.00px;top:308px;font-size:12px;line-height:16px;color:#000;transform:scaleX(0.9910);">Marcar</div><div class="t" style="left:355.00px;top:308px;font-size:12px;line-height:16px;color:#000;">Archivos</div><div class="t" style="left:410.00px;top:308px;font-size:12px;line-height:16px;color:#000;transform:scaleX(0.9822);">Comandos</div><div class="t" style="left:477.00px;top:308px;font-size:12px;line-height:16px;color:#000;transform:scaleX(0.9266);">Sesión</div><div class="t" style="left:520.00px;top:308px;font-size:12px;line-height:16px;color:#000;transform:scaleX(0.9665);">Opciones</div><div class="t" style="left:579.00px;top:308px;font-size:12px;line-height:16px;color:#000;transform:scaleX(0.9757);">Remoto</div><div class="t" style="left:630.00px;top:308px;font-size:12px;line-height:16px;color:#000;transform:scaleX(1.0056);">Ayuda</div><svg class="a" style="left:264px;top:334px;" width="3" height="16" viewBox="0 0 3 16"><rect x="0" y="0" width="3" height="1" fill="#b4b8bc"/><rect x="0" y="2" width="3" height="1" fill="#b4b8bc"/><rect x="0" y="4" width="3" height="1" fill="#b4b8bc"/><rect x="0" y="6" width="3" height="1" fill="#b4b8bc"/><rect x="0" y="8" width="3" height="1" fill="#b4b8bc"/><rect x="0" y="10" width="3" height="1" fill="#b4b8bc"/><rect x="0" y="12" width="3" height="1" fill="#b4b8bc"/><rect x="0" y="14" width="3" height="1" fill="#b4b8bc"/></svg><svg class="a" style="left:270px;top:333px;" width="17" height="16" viewBox="0 0 17 16"><rect x="0.5" y="0.5" width="16" height="15" fill="#fff" stroke="#1f3f8f" stroke-width="1.2"/><path d="M8.5 1 V15" stroke="#1f3f8f"/><path d="M2 8 H15 M2 8 L5 5 M2 8 L5 11 M15 8 L12 5 M15 8 L12 11" stroke="#c81a1a" stroke-width="1.6" fill="none"/></svg><svg class="a" style="left:294px;top:333px;" width="17" height="16" viewBox="0 0 17 16"><path d="M1 1 H6 L7 2.5 H11 V8 H1Z" fill="#f3d05a" stroke="#c29a30"/><path d="M6 8 H11 L12 9.5 H16 V15 H6Z" fill="#f3d05a" stroke="#c29a30"/><path d="M12 2 C15 2 15 5 13 6" stroke="#1aa81a" stroke-width="1.5" fill="none"/><path d="M4 14 C1 14 1 11 3 10" stroke="#d82020" stroke-width="1.5" fill="none"/></svg><svg class="a" style="left:317px;top:333px;" width="17" height="17" viewBox="0 0 17 17"><path d="M1 2 H6 L7 3.5 H14 V12 H1Z" fill="#f3d05a" stroke="#c29a30"/><path d="M8 13 C8 9 12 8 15 10 M15 10 L15 7 M15 10 L12 10" stroke="#1aa81a" stroke-width="2" fill="none"/><path d="M6 15 C10 16 14 15 16 13" stroke="#1aa81a" stroke-width="2" fill="none"/></svg><div class="t" style="left:338.00px;top:333px;font-size:12px;line-height:16px;color:#000;transform:scaleX(0.9663);">Sincronizar</div><div class="a" style="left:404px;top:329px;width:1px;height:24px;background:#c5c8cc;box-shadow:1px 0 0 #fff"></div><svg class="a" style="left:410px;top:333px;" width="17" height="15" viewBox="0 0 17 15"><rect x="0.5" y="0.5" width="16" height="14" fill="#1e2a38" stroke="#0a0f14"/><rect x="1" y="1" width="15" height="4" fill="#3a4a5e"/><path d="M3 8 L6 10 L3 12" stroke="#ddd" fill="none"/></svg><svg class="a" style="left:433px;top:333px;" width="17" height="16" viewBox="0 0 17 16"><rect x="5" y="0.5" width="11" height="8" fill="#9ac0e8" stroke="#3a5a8a"/><rect x="0.5" y="6" width="11" height="8" fill="#9ac0e8" stroke="#3a5a8a"/><path d="M9 2 L5 9 H8 L6 15 L12 7 H9Z" fill="#f5d020" stroke="#a88010" stroke-width="0.6"/></svg><div class="a" style="left:456px;top:329px;width:1px;height:24px;background:#c5c8cc;box-shadow:1px 0 0 #fff"></div><svg class="a" style="left:462px;top:333px;" width="17" height="16" viewBox="0 0 17 16"><rect x="0.5" y="0.5" width="16" height="15" fill="#fff" stroke="#1f3f8f" stroke-width="1.2"/><path d="M4 6 C5 2 11 2 12 5 M12 5 V2 M12 5 H9" stroke="#1aa81a" stroke-width="2" fill="none"/><path d="M12 10 C11 14 5 14 4 11 M4 11 V14 M4 11 H7" stroke="#1aa81a" stroke-width="2" fill="none"/></svg><svg class="a" style="left:492px;top:334px;" width="3" height="16" viewBox="0 0 3 16"><rect x="0" y="0" width="3" height="1" fill="#b4b8bc"/><rect x="0" y="2" width="3" height="1" fill="#b4b8bc"/><rect x="0" y="4" width="3" height="1" fill="#b4b8bc"/><rect x="0" y="6" width="3" height="1" fill="#b4b8bc"/><rect x="0" y="8" width="3" height="1" fill="#b4b8bc"/><rect x="0" y="10" width="3" height="1" fill="#b4b8bc"/><rect x="0" y="12" width="3" height="1" fill="#b4b8bc"/><rect x="0" y="14" width="3" height="1" fill="#b4b8bc"/></svg><svg class="a" style="left:499px;top:333px;" width="16" height="16" viewBox="0 0 16 16"><circle cx="8" cy="8" r="6" fill="#a8aeb4" stroke="#6a7078" stroke-width="1"/><circle cx="8" cy="8" r="7.5" fill="none" stroke="#8a9098" stroke-width="2.5" stroke-dasharray="2.2 1.7"/><circle cx="8" cy="8" r="2.5" fill="#f0f0f0" stroke="#6a7078"/></svg><div class="a" style="left:522px;top:329px;width:1px;height:24px;background:#c5c8cc;box-shadow:1px 0 0 #fff"></div><svg class="a" style="left:528px;top:333px;" width="17" height="16" viewBox="0 0 17 16"><path d="M0.5 4.5 H8 L10.5 7 V15.5 H0.5Z" fill="#e8eef6" stroke="#4a6a9a"/><path d="M4.5 2.5 H12 L14.5 5 V12" fill="none" stroke="#4a6a9a"/><path d="M7.5 0.5 H14 L16.5 3 V9" fill="none" stroke="#4a6a9a"/><path d="M2.5 9 H8 M2.5 11 H8 M2.5 13 H8" stroke="#4a6a9a" stroke-width="0.8"/></svg><div class="t" style="left:549.00px;top:333px;font-size:12px;line-height:16px;color:#000;transform:scaleX(0.9724);">Cola</div><svg class="a" style="left:580px;top:340px;" width="7" height="4" viewBox="0 0 7 4"><path d="M0 0 H6 L3 3Z" fill="#222"/></svg><svg class="a" style="left:628px;top:334px;" width="3" height="16" viewBox="0 0 3 16"><rect x="0" y="0" width="3" height="1" fill="#b4b8bc"/><rect x="0" y="2" width="3" height="1" fill="#b4b8bc"/><rect x="0" y="4" width="3" height="1" fill="#b4b8bc"/><rect x="0" y="6" width="3" height="1" fill="#b4b8bc"/><rect x="0" y="8" width="3" height="1" fill="#b4b8bc"/><rect x="0" y="10" width="3" height="1" fill="#b4b8bc"/><rect x="0" y="12" width="3" height="1" fill="#b4b8bc"/><rect x="0" y="14" width="3" height="1" fill="#b4b8bc"/></svg><div class="t" style="left:635.00px;top:333px;font-size:12px;line-height:16px;color:#000;transform:scaleX(0.9348);">Preajustes</div><div class="a" style="left:693px;top:331px;width:148px;height:21px;background:#fff;border:1px solid #f4f4f4;box-sizing:border-box"></div><div class="t" style="left:695.00px;top:333px;font-size:12px;line-height:16px;color:#000;transform:scaleX(0.9018);">Predeterminado</div><div class="a" style="left:829px;top:332px;width:11px;height:19px;background:#f3f3f3"></div><svg class="a" style="left:831px;top:340px;" width="7" height="4" viewBox="0 0 7 4"><path d="M0 0 H6 L3 3Z" fill="#222"/></svg><svg class="a" style="left:883px;top:334px;" width="3" height="16" viewBox="0 0 3 16"><rect x="0" y="0" width="3" height="1" fill="#b4b8bc"/><rect x="0" y="2" width="3" height="1" fill="#b4b8bc"/><rect x="0" y="4" width="3" height="1" fill="#b4b8bc"/><rect x="0" y="6" width="3" height="1" fill="#b4b8bc"/><rect x="0" y="8" width="3" height="1" fill="#b4b8bc"/><rect x="0" y="10" width="3" height="1" fill="#b4b8bc"/><rect x="0" y="12" width="3" height="1" fill="#b4b8bc"/><rect x="0" y="14" width="3" height="1" fill="#b4b8bc"/></svg><svg class="a" style="left:889px;top:333px;" width="18" height="16" viewBox="0 0 18 16"><path d="M3 6 C4 1 13 1 15 5 M15 5 V1.5 M15 5 H11" stroke="#d82a2a" stroke-width="2.6" fill="none"/><path d="M15 10 C14 15 5 15 3 11 M3 11 V14.5 M3 11 H7" stroke="#d82a2a" stroke-width="2.6" fill="none"/><circle cx="9" cy="8" r="3.5" fill="#3a8ad8"/><path d="M7 7 H11 M9 6 V10" stroke="#5ac05a" stroke-width="1.5"/></svg><svg class="a" style="left:912px;top:340px;" width="7" height="4" viewBox="0 0 7 4"><path d="M0 0 H6 L3 3Z" fill="#222"/></svg><div class="a" style="left:260px;top:377px;width:1074px;height:1px;background:#a0a0a0"></div><div class="a" style="left:435px;top:357px;width:102px;height:21px;background:linear-gradient(#f4f4f4,#dcdcdc);border:1px solid #a8a8a8;border-bottom:none;box-sizing:border-box"></div><svg class="a" style="left:441px;top:360px;" width="18" height="16" viewBox="0 0 18 16"><rect x="0.5" y="3.5" width="14" height="9" rx="1" fill="#2a6ad8" stroke="#1a3a78"/><rect x="2" y="5" width="11" height="6" fill="#78b4f4"/><rect x="4" y="13" width="7" height="2" fill="#333"/><circle cx="14" cy="4" r="3" fill="#fff" stroke="#6aa8e8"/></svg><div class="t" style="left:461.00px;top:360px;font-size:12px;line-height:16px;color:#000;transform:scaleX(0.9627);">Nueva sesión</div><div class="a" style="left:260px;top:355px;width:175px;height:24px;background:#fff;border:1px solid #a8a8a8;border-bottom:none;box-sizing:border-box"></div><svg class="a" style="left:269px;top:360px;" width="15" height="14" viewBox="0 0 15 14"><rect x="0.5" y="0.5" width="14" height="10" rx="1" fill="#3a5a88" stroke="#2a3a58"/><rect x="1.5" y="1.5" width="12" height="8" fill="#8ec0f0"/><path d="M1.5 6 C5 3 9 3 13.5 2 V1.5 H1.5Z" fill="#c8e0fa"/><rect x="6" y="11" width="3" height="2" fill="#333"/><rect x="3" y="12.5" width="9" height="1.5" fill="#333"/></svg><div class="t" style="left:291.00px;top:359px;font-size:12px;line-height:16px;color:#000;transform:scaleX(0.9345);">sftpchile@45.56.71.192</div><svg class="a" style="left:416px;top:361px;" width="10" height="10" viewBox="0 0 10 10"><path d="M1 1 L9 9 M9 1 L1 9" stroke="#222" stroke-width="1.3"/></svg><svg class="a" style="left:264px;top:384px;" width="3" height="16" viewBox="0 0 3 16"><rect x="0" y="0" width="3" height="1" fill="#b4b8bc"/><rect x="0" y="2" width="3" height="1" fill="#b4b8bc"/><rect x="0" y="4" width="3" height="1" fill="#b4b8bc"/><rect x="0" y="6" width="3" height="1" fill="#b4b8bc"/><rect x="0" y="8" width="3" height="1" fill="#b4b8bc"/><rect x="0" y="10" width="3" height="1" fill="#b4b8bc"/><rect x="0" y="12" width="3" height="1" fill="#b4b8bc"/><rect x="0" y="14" width="3" height="1" fill="#b4b8bc"/></svg><div class="a" style="left:269px;top:381px;width:124px;height:22px;background:#fff"></div><div class="a" style="left:382px;top:382px;width:10px;height:20px;background:#f3f3f3"></div><svg class="a" style="left:271px;top:385px;" width="17" height="15" viewBox="0 0 17 15"><path d="M2 6 H15 L16.5 11 V14 H0.5 V11Z" fill="#d8dadc" stroke="#6a6e72"/><rect x="1.5" y="11" width="14" height="2" fill="#b8bcc0"/><rect x="12" y="11.5" width="2" height="1.5" fill="#3ac03a"/></svg><div class="t" style="left:289.00px;top:384px;font-size:12px;line-height:16px;color:#000;transform:scaleX(0.9898);">D: Nuevo vol</div><svg class="a" style="left:384px;top:390px;" width="7" height="4" viewBox="0 0 7 4"><path d="M0 0 H6 L3 3Z" fill="#222"/></svg><svg class="a" style="left:398px;top:382px;" width="18" height="17" viewBox="0 0 18 17"><path d="M0.5 4.5 H6 L7.5 6 H14.5 V15.5 H0.5Z" fill="#e0b73a" stroke="#b8902a"/><path d="M0.5 15.5 L3 8.5 H17.5 L14.5 15.5Z" fill="#f5d769" stroke="#c29a30"/><path d="M8 6 C9 1 15 1 16 4 M16 4 V0.5 M16 4 H12.5" stroke="#2ab02a" stroke-width="2.2" fill="none"/></svg><svg class="a" style="left:420px;top:390px;" width="7" height="4" viewBox="0 0 7 4"><path d="M0 0 H6 L3 3Z" fill="#222"/></svg><svg class="a" style="left:433px;top:384px;" width="16" height="15" viewBox="0 0 16 15"><rect x="0.5" y="0.5" width="15" height="14" fill="#fff" stroke="#1f3f8f" stroke-width="1.2"/><path d="M3 3 H13 L9 8 V12 L7 11 V8Z" fill="#fff" stroke="#333"/></svg><svg class="a" style="left:455px;top:390px;" width="7" height="4" viewBox="0 0 7 4"><path d="M0 0 H6 L3 3Z" fill="#222"/></svg><svg class="a" style="left:471px;top:384px;" width="3" height="16" viewBox="0 0 3 16"><rect x="0" y="0" width="3" height="1" fill="#b4b8bc"/><rect x="0" y="2" width="3" height="1" fill="#b4b8bc"/><rect x="0" y="4" width="3" height="1" fill="#b4b8bc"/><rect x="0" y="6" width="3" height="1" fill="#b4b8bc"/><rect x="0" y="8" width="3" height="1" fill="#b4b8bc"/><rect x="0" y="10" width="3" height="1" fill="#b4b8bc"/><rect x="0" y="12" width="3" height="1" fill="#b4b8bc"/><rect x="0" y="14" width="3" height="1" fill="#b4b8bc"/></svg><svg class="a" style="left:478px;top:385px;" width="16" height="12" viewBox="0 0 16 12"><path d="M1 6 L7 1 V4 H15 V8 H7 V11Z" fill="#c8c8c8"/></svg><svg class="a" style="left:500px;top:390px;" width="7" height="4" viewBox="0 0 7 4"><path d="M0 0 H6 L3 3Z" fill="#c0c0c0"/></svg><svg class="a" style="left:513px;top:385px;" width="16" height="12" viewBox="0 0 16 12"><path d="M15 6 L9 1 V4 H1 V8 H9 V11Z" fill="#c8c8c8"/></svg><svg class="a" style="left:535px;top:390px;" width="7" height="4" viewBox="0 0 7 4"><path d="M0 0 H6 L3 3Z" fill="#c0c0c0"/></svg><svg class="a" style="left:551px;top:384px;" width="3" height="16" viewBox="0 0 3 16"><rect x="0" y="0" width="3" height="1" fill="#b4b8bc"/><rect x="0" y="2" width="3" height="1" fill="#b4b8bc"/><rect x="0" y="4" width="3" height="1" fill="#b4b8bc"/><rect x="0" y="6" width="3" height="1" fill="#b4b8bc"/><rect x="0" y="8" width="3" height="1" fill="#b4b8bc"/><rect x="0" y="10" width="3" height="1" fill="#b4b8bc"/><rect x="0" y="12" width="3" height="1" fill="#b4b8bc"/><rect x="0" y="14" width="3" height="1" fill="#b4b8bc"/></svg><svg class="a" style="left:558px;top:384px;" width="16" height="16" viewBox="0 0 16 16"><path d="M0.5 2.5 H6 L7.5 4.5 H15.5 V14.5 H0.5Z" fill="#e0b73a" stroke="#b8902a"/><path d="M0.5 5.5 H15.5 V14.5 H0.5Z" fill="#f5d769" stroke="#c29a30"/><path d="M5 10 L3 12 L5 14 M3.5 12 H10 V8" stroke="#222" stroke-width="1.2" fill="none"/></svg><svg class="a" style="left:581px;top:384px;" width="16" height="16" viewBox="0 0 16 16"><path d="M0.5 2.5 H6 L7.5 4.5 H15.5 V14.5 H0.5Z" fill="#e0b73a" stroke="#b8902a"/><path d="M0.5 5.5 H15.5 V14.5 H0.5Z" fill="#f5d769" stroke="#c29a30"/><path d="M7 8 L9 13" stroke="#222" stroke-width="1.3"/></svg><svg class="a" style="left:604px;top:383px;" width="16" height="16" viewBox="0 0 16 16"><path d="M0.5 8.5 L8 1 L15.5 8.5 H13.5 V15.5 H2.5 V8.5Z" fill="#f0f4fa" stroke="#2a4a8a" stroke-width="1.2"/><rect x="6.5" y="9.5" width="3" height="6" fill="#2a6ad8"/></svg><svg class="a" style="left:628px;top:383px;" width="16" height="16" viewBox="0 0 16 16"><path d="M2 7 C3 2 11 1 13 4.5 M13 4.5 V0.5 M13 4.5 H9" stroke="#1aa81a" stroke-width="3" fill="none"/><path d="M14 9 C13 14 5 15 3 11.5 M3 11.5 V15.5 M3 11.5 H7" stroke="#1aa81a" stroke-width="3" fill="none"/></svg><div class="a" style="left:650px;top:382px;width:1px;height:22px;background:#c5c8cc;box-shadow:1px 0 0 #fff"></div><svg class="a" style="left:656px;top:383px;" width="16" height="16" viewBox="0 0 16 16"><path d="M0.5 1.5 H4 L5 2.5 H7.5 V6.5 H0.5Z" fill="#f5d769" stroke="#c29a30"/><path d="M8.5 9.5 H12 L13 10.5 H15.5 V14.5 H8.5Z" fill="#f5d769" stroke="#c29a30"/><path d="M3 7 V12 H8" stroke="#333" stroke-dasharray="1 1" fill="none"/></svg><svg class="a" style="left:264px;top:410px;" width="3" height="15" viewBox="0 0 3 15"><rect x="0" y="0" width="3" height="1" fill="#b4b8bc"/><rect x="0" y="2" width="3" height="1" fill="#b4b8bc"/><rect x="0" y="4" width="3" height="1" fill="#b4b8bc"/><rect x="0" y="6" width="3" height="1" fill="#b4b8bc"/><rect x="0" y="8" width="3" height="1" fill="#b4b8bc"/><rect x="0" y="10" width="3" height="1" fill="#b4b8bc"/><rect x="0" y="12" width="3" height="1" fill="#b4b8bc"/><rect x="0" y="14" width="3" height="1" fill="#b4b8bc"/></svg><svg class="a" style="left:271px;top:410px;" width="17" height="16" viewBox="0 0 17 16"><path d="M3.5 0.5 H11 L14.5 4 V15.5 H3.5Z" fill="#f2f2f2" stroke="#b0b0b0"/><path d="M0.5 6 H8 V15.5 H0.5Z" fill="#e6e6e6" stroke="#b8b8b8"/><path d="M9 12 L13 8 L16 11" stroke="#c0c0c0" stroke-width="1.8" fill="none"/></svg><div class="t" style="left:292.00px;top:410px;font-size:12px;line-height:16px;color:#a8a8a8;transform:scaleX(0.9638);">Subir</div><svg class="a" style="left:325px;top:417px;" width="7" height="4" viewBox="0 0 7 4"><path d="M0 0 H6 L3 3Z" fill="#c0c0c0"/></svg><div class="a" style="left:340px;top:408px;width:1px;height:22px;background:#c5c8cc;box-shadow:1px 0 0 #fff"></div><svg class="a" style="left:345px;top:410px;" width="17" height="16" viewBox="0 0 17 16"><rect x="0.5" y="3.5" width="12" height="12" fill="#f4f4f4" stroke="#b8b8b8"/><path d="M5 11 L14 2 L16 4 L7 13 L4 14Z" fill="#d8d8d8" stroke="#a8a8a8"/></svg><div class="t" style="left:366.00px;top:410px;font-size:12px;line-height:16px;color:#a8a8a8;transform:scaleX(0.9570);">Editar</div><svg class="a" style="left:403px;top:417px;" width="7" height="4" viewBox="0 0 7 4"><path d="M0 0 H6 L3 3Z" fill="#c0c0c0"/></svg><svg class="a" style="left:417px;top:411px;" width="14" height="14" viewBox="0 0 14 14"><path d="M2 2 L12 12 M12 2 L2 12" stroke="#b0b0b0" stroke-width="3.2"/></svg><svg class="a" style="left:439px;top:410px;" width="16" height="16" viewBox="0 0 16 16"><rect x="0.5" y="8.5" width="14" height="7" fill="#f4f4f4" stroke="#b8b8b8"/><path d="M6 12 L13 2 L15 3.5 L8 13Z" fill="#e0e0e0" stroke="#a8a8a8"/><text x="2" y="15" font-size="6" fill="#aaa" font-family="Liberation Sans">x</text></svg><svg class="a" style="left:462px;top:410px;" width="16" height="16" viewBox="0 0 16 16"><path d="M0.5 0.5 H8 L11.5 4 V15.5 H0.5Z" fill="#f4f4f4" stroke="#b8b8b8"/><rect x="7.5" y="8.5" width="8" height="7" fill="#f4f4f4" stroke="#b8b8b8"/><path d="M9 12 L11 14 L14 10" stroke="#b0b0b0" fill="none"/></svg><div class="t" style="left:483.00px;top:410px;font-size:12px;line-height:16px;color:#a8a8a8;transform:scaleX(0.9646);">Propiedades</div><div class="a" style="left:556px;top:408px;width:1px;height:22px;background:#c5c8cc;box-shadow:1px 0 0 #fff"></div><svg class="a" style="left:562px;top:409px;" width="17" height="17" viewBox="0 0 17 17"><path d="M0.5 6.5 H6 L7.5 8 H14.5 V16.5 H0.5Z" fill="#e9c24a" stroke="#b8902a"/><path d="M0.5 9.5 H14.5 V16.5 H0.5Z" fill="#f5d769" stroke="#c29a30"/><circle cx="13" cy="4" r="3" fill="#fff" stroke="#5a8ad8" stroke-width="1.3" stroke-dasharray="1.5 1"/></svg><div class="t" style="left:584.00px;top:410px;font-size:12px;line-height:16px;color:#000;transform:scaleX(0.9513);">Nuevo</div><svg class="a" style="left:623px;top:417px;" width="7" height="4" viewBox="0 0 7 4"><path d="M0 0 H6 L3 3Z" fill="#222"/></svg><svg class="a" style="left:639px;top:410px;" width="3" height="15" viewBox="0 0 3 15"><rect x="0" y="0" width="3" height="1" fill="#b4b8bc"/><rect x="0" y="2" width="3" height="1" fill="#b4b8bc"/><rect x="0" y="4" width="3" height="1" fill="#b4b8bc"/><rect x="0" y="6" width="3" height="1" fill="#b4b8bc"/><rect x="0" y="8" width="3" height="1" fill="#b4b8bc"/><rect x="0" y="10" width="3" height="1" fill="#b4b8bc"/><rect x="0" y="12" width="3" height="1" fill="#b4b8bc"/><rect x="0" y="14" width="3" height="1" fill="#b4b8bc"/></svg><svg class="a" style="left:646px;top:410px;" width="16" height="16" viewBox="0 0 16 16"><rect x="0.5" y="0.5" width="15" height="15" fill="#fff" stroke="#1f3f8f" stroke-width="1.2"/><path d="M8 3 V13 M3 8 H13" stroke="#2a5ab8" stroke-width="2"/></svg><svg class="a" style="left:669px;top:410px;" width="16" height="16" viewBox="0 0 16 16"><rect x="0.5" y="0.5" width="15" height="15" fill="#f8f8f8" stroke="#c0c0c0"/><path d="M3 8 H13" stroke="#c0c0c0" stroke-width="2"/></svg><svg class="a" style="left:692px;top:410px;" width="16" height="16" viewBox="0 0 16 16"><rect x="0.5" y="0.5" width="15" height="15" fill="#fff" stroke="#1f3f8f" stroke-width="1.2"/><path d="M3 3 H13 L8 13Z" fill="none" stroke="#2a4a8a" stroke-width="1.6"/><path d="M3 3 H13" stroke="#2a4a8a" stroke-width="2"/></svg><div class="a" style="left:260px;top:431px;width:534px;height:21px;background:#bfcedd"></div><div class="t" style="left:265.00px;top:434px;font-size:12px;line-height:16px;color:#3c4a58;transform:scaleX(1.0108);">D:\Energix\</div><div class="a" style="left:260px;top:452px;width:534px;height:463px;background:#fff;border:1px solid #828790;box-sizing:border-box"></div><div class="a" style="left:261px;top:453px;width:532px;height:24px;background:linear-gradient(#ffffff 0%,#ffffff 45%,#f3f4f6 46%,#f1f2f4 100%);border-bottom:1px solid #d5d5d5;box-sizing:border-box"></div><div class="a" style="left:262px;top:453px;width:150px;height:24px;background:linear-gradient(#f4fafd 0%,#eef7fc 45%,#ddeff9 46%,#cde7f6 100%);border:1px solid #a5d2ec;border-top:none;box-sizing:border-box"></div><svg class="a" style="left:332px;top:454px;" width="9" height="5" viewBox="0 0 9 5"><path d="M0.5 4.5 L4.5 0.5 L8.5 4.5" stroke="#6aa4d0" fill="none" stroke-width="1.2"/></svg><div class="a" style="left:412px;top:454px;width:1px;height:22px;background:#e3e6ea"></div><div class="t" style="left:268.00px;top:458px;font-size:12px;line-height:16px;color:#1e1e1e;transform:scaleX(1.1012);">Nombre</div><div class="a" style="left:482px;top:454px;width:1px;height:22px;background:#e3e6ea"></div><div class="t" style="left:430.00px;top:458px;font-size:12px;line-height:16px;color:#1e1e1e;transform:scaleX(1.1009);">Tamaño</div><div class="a" style="left:602px;top:454px;width:1px;height:22px;background:#e3e6ea"></div><div class="t" style="left:488.00px;top:458px;font-size:12px;line-height:16px;color:#1e1e1e;">Tipo</div><div class="a" style="left:752px;top:454px;width:1px;height:22px;background:#e3e6ea"></div><div class="t" style="left:608.00px;top:458px;font-size:12px;line-height:16px;color:#1e1e1e;transform:scaleX(0.9305);">Modificado</div><div class="a" style="left:792px;top:454px;width:1px;height:22px;background:#e3e6ea"></div><div class="a" style="left:412px;top:477px;width:1px;height:437px;background:#f0f1f4"></div><div class="a" style="left:482px;top:477px;width:1px;height:437px;background:#f0f1f4"></div><div class="a" style="left:602px;top:477px;width:1px;height:437px;background:#f0f1f4"></div><div class="a" style="left:752px;top:477px;width:1px;height:437px;background:#f0f1f4"></div><div class="a" style="left:792px;top:477px;width:1px;height:437px;background:#f0f1f4"></div><svg class="a" style="left:267px;top:479px;" width="14" height="16" viewBox="0 0 14 16"><path d="M1 1 H9 L13 4 V15 H1Z" fill="#f0d070" stroke="#c9a040"/><path d="M6 2 V14" stroke="#d8b450"/><path d="M4 8 L1.5 10.5 L4 13 M2 10.5 H8 V6" stroke="#222" stroke-width="1.3" fill="none"/></svg><div class="t" style="left:285.00px;top:480px;font-size:12px;line-height:16px;color:#000;">..</div><div class="t" style="left:488.00px;top:480px;font-size:12px;line-height:16px;color:#000;transform:scaleX(1.0098);">Directorio superior</div><div class="t" style="left:608.00px;top:480px;font-size:12px;line-height:16px;color:#000;transform:scaleX(0.9308);">25-06-2020  11:50:38</div><svg class="a" style="left:266px;top:498px;" width="17" height="16" viewBox="0 0 17 16"><path d="M4.5 3.5 H12 L15.5 7 V15.5 H4.5Z" fill="#f2f6fb" stroke="#5a78a8"/><rect x="10" y="10" width="3" height="3" fill="#2a5ab8"/><rect x="0.5" y="0.5" width="9" height="9" fill="#e6f4e0" stroke="#2f7f2f"/><path d="M2 2 L8 8 M8 2 L2 8" stroke="#2f8f2f" stroke-width="1.8"/></svg><div class="t" style="left:285.00px;top:499px;font-size:12px;line-height:16px;color:#000;transform:scaleX(0.9675);">ColunOnline.CSV</div><div class="t" style="left:451.00px;top:499px;font-size:12px;line-height:16px;color:#000;transform:scaleX(0.8841);">2 KB</div><div class="t" style="left:488.00px;top:499px;font-size:12px;line-height:16px;color:#000;transform:scaleX(0.9750);">Archivo de valores...</div><div class="t" style="left:608.00px;top:499px;font-size:12px;line-height:16px;color:#000;transform:scaleX(0.9236);">07-08-2020  15:51:45</div><div class="t" style="left:264.00px;top:918px;font-size:12px;line-height:16px;color:#000;transform:scaleX(0.9097);">0 B de 1,07 KB en 0 de 1</div><div class="a" style="left:260px;top:937px;width:534px;height:1px;background:#dcdcdc"></div><svg class="a" style="left:803px;top:384px;" width="3" height="16" viewBox="0 0 3 16"><rect x="0" y="0" width="3" height="1" fill="#b4b8bc"/><rect x="0" y="2" width="3" height="1" fill="#b4b8bc"/><rect x="0" y="4" width="3" height="1" fill="#b4b8bc"/><rect x="0" y="6" width="3" height="1" fill="#b4b8bc"/><rect x="0" y="8" width="3" height="1" fill="#b4b8bc"/><rect x="0" y="10" width="3" height="1" fill="#b4b8bc"/><rect x="0" y="12" width="3" height="1" fill="#b4b8bc"/><rect x="0" y="14" width="3" height="1" fill="#b4b8bc"/></svg><div class="a" style="left:808px;top:381px;width:90px;height:21px;background:#fff"></div><div class="a" style="left:886px;top:382px;width:11px;height:19px;background:#f3f3f3"></div><svg class="a" style="left:811px;top:383px;" width="15" height="17" viewBox="0 0 15 17"><path d="M1 2 C3 0 7 0 9 2 V15 C7 13 3 13 1 15Z" fill="#f0cf68" stroke="#c9a040"/><path d="M6 3 C8 1 12 1 14 3 V16 C12 14 8 14 6 16Z" fill="#f7de88" stroke="#c9a040"/></svg><div class="t" style="left:828.00px;top:384px;font-size:12px;line-height:16px;color:#000;transform:scaleX(1.0619);">incoming</div><svg class="a" style="left:888px;top:390px;" width="7" height="4" viewBox="0 0 7 4"><path d="M0 0 H6 L3 3Z" fill="#222"/></svg><svg class="a" style="left:902px;top:382px;" width="18" height="17" viewBox="0 0 18 17"><path d="M0.5 4.5 H6 L7.5 6 H14.5 V15.5 H0.5Z" fill="#e0b73a" stroke="#b8902a"/><path d="M0.5 15.5 L3 8.5 H17.5 L14.5 15.5Z" fill="#f5d769" stroke="#c29a30"/><path d="M8 6 C9 1 15 1 16 4 M16 4 V0.5 M16 4 H12.5" stroke="#2ab02a" stroke-width="2.2" fill="none"/></svg><svg class="a" style="left:924px;top:390px;" width="7" height="4" viewBox="0 0 7 4"><path d="M0 0 H6 L3 3Z" fill="#222"/></svg><svg class="a" style="left:937px;top:384px;" width="16" height="15" viewBox="0 0 16 15"><rect x="0.5" y="0.5" width="15" height="14" fill="#fff" stroke="#1f3f8f" stroke-width="1.2"/><path d="M3 3 H13 L9 8 V12 L7 11 V8Z" fill="#fff" stroke="#333"/></svg><svg class="a" style="left:958px;top:390px;" width="7" height="4" viewBox="0 0 7 4"><path d="M0 0 H6 L3 3Z" fill="#222"/></svg><svg class="a" style="left:975px;top:384px;" width="3" height="16" viewBox="0 0 3 16"><rect x="0" y="0" width="3" height="1" fill="#b4b8bc"/><rect x="0" y="2" width="3" height="1" fill="#b4b8bc"/><rect x="0" y="4" width="3" height="1" fill="#b4b8bc"/><rect x="0" y="6" width="3" height="1" fill="#b4b8bc"/><rect x="0" y="8" width="3" height="1" fill="#b4b8bc"/><rect x="0" y="10" width="3" height="1" fill="#b4b8bc"/><rect x="0" y="12" width="3" height="1" fill="#b4b8bc"/><rect x="0" y="14" width="3" height="1" fill="#b4b8bc"/></svg><svg class="a" style="left:982px;top:385px;" width="16" height="12" viewBox="0 0 16 12"><path d="M1 6 L7 1 V4 H15 V8 H7 V11Z" fill="#c8c8c8"/></svg><svg class="a" style="left:1003px;top:390px;" width="7" height="4" viewBox="0 0 7 4"><path d="M0 0 H6 L3 3Z" fill="#c0c0c0"/></svg><svg class="a" style="left:1017px;top:385px;" width="16" height="12" viewBox="0 0 16 12"><path d="M15 6 L9 1 V4 H1 V8 H9 V11Z" fill="#c8c8c8"/></svg><svg class="a" style="left:1038px;top:390px;" width="7" height="4" viewBox="0 0 7 4"><path d="M0 0 H6 L3 3Z" fill="#c0c0c0"/></svg><svg class="a" style="left:1055px;top:384px;" width="3" height="16" viewBox="0 0 3 16"><rect x="0" y="0" width="3" height="1" fill="#b4b8bc"/><rect x="0" y="2" width="3" height="1" fill="#b4b8bc"/><rect x="0" y="4" width="3" height="1" fill="#b4b8bc"/><rect x="0" y="6" width="3" height="1" fill="#b4b8bc"/><rect x="0" y="8" width="3" height="1" fill="#b4b8bc"/><rect x="0" y="10" width="3" height="1" fill="#b4b8bc"/><rect x="0" y="12" width="3" height="1" fill="#b4b8bc"/><rect x="0" y="14" width="3" height="1" fill="#b4b8bc"/></svg><svg class="a" style="left:1062px;top:384px;" width="16" height="16" viewBox="0 0 16 16"><path d="M0.5 2.5 H6 L7.5 4.5 H15.5 V14.5 H0.5Z" fill="#e0b73a" stroke="#b8902a"/><path d="M0.5 5.5 H15.5 V14.5 H0.5Z" fill="#f5d769" stroke="#c29a30"/><path d="M5 10 L3 12 L5 14 M3.5 12 H10 V8" stroke="#222" stroke-width="1.2" fill="none"/></svg><svg class="a" style="left:1085px;top:384px;" width="16" height="16" viewBox="0 0 16 16"><path d="M0.5 2.5 H6 L7.5 4.5 H15.5 V14.5 H0.5Z" fill="#e0b73a" stroke="#b8902a"/><path d="M0.5 5.5 H15.5 V14.5 H0.5Z" fill="#f5d769" stroke="#c29a30"/><path d="M9 8 L7 13" stroke="#222" stroke-width="1.3"/></svg><svg class="a" style="left:1108px;top:383px;" width="16" height="16" viewBox="0 0 16 16"><path d="M0.5 8.5 L8 1 L15.5 8.5 H13.5 V15.5 H2.5 V8.5Z" fill="#f0f4fa" stroke="#2a4a8a" stroke-width="1.2"/><rect x="6.5" y="9.5" width="3" height="6" fill="#2a6ad8"/></svg><svg class="a" style="left:1132px;top:383px;" width="16" height="16" viewBox="0 0 16 16"><path d="M2 7 C3 2 11 1 13 4.5 M13 4.5 V0.5 M13 4.5 H9" stroke="#1aa81a" stroke-width="3" fill="none"/><path d="M14 9 C13 14 5 15 3 11.5 M3 11.5 V15.5 M3 11.5 H7" stroke="#1aa81a" stroke-width="3" fill="none"/></svg><div class="a" style="left:1154px;top:382px;width:1px;height:22px;background:#c5c8cc;box-shadow:1px 0 0 #fff"></div><svg class="a" style="left:1160px;top:383px;" width="17" height="17" viewBox="0 0 17 17"><rect x="0.5" y="2.5" width="11" height="12" fill="#e8eef6" stroke="#4a6a9a"/><circle cx="9" cy="8" r="4.5" fill="#fff" stroke="#333" stroke-width="1.5"/><path d="M12 11 L16 15" stroke="#333" stroke-width="2.5"/></svg><div class="t" style="left:1181.00px;top:384px;font-size:12px;line-height:16px;color:#000;transform:scaleX(0.9605);">Buscar archivos</div><div class="a" style="left:1271px;top:382px;width:1px;height:22px;background:#c5c8cc;box-shadow:1px 0 0 #fff"></div><svg class="a" style="left:1277px;top:383px;" width="16" height="16" viewBox="0 0 16 16"><path d="M0.5 1.5 H4 L5 2.5 H7.5 V6.5 H0.5Z" fill="#f5d769" stroke="#c29a30"/><path d="M8.5 9.5 H12 L13 10.5 H15.5 V14.5 H8.5Z" fill="#f5d769" stroke="#c29a30"/><path d="M3 7 V12 H8" stroke="#333" stroke-dasharray="1 1" fill="none"/></svg><svg class="a" style="left:803px;top:410px;" width="3" height="15" viewBox="0 0 3 15"><rect x="0" y="0" width="3" height="1" fill="#b4b8bc"/><rect x="0" y="2" width="3" height="1" fill="#b4b8bc"/><rect x="0" y="4" width="3" height="1" fill="#b4b8bc"/><rect x="0" y="6" width="3" height="1" fill="#b4b8bc"/><rect x="0" y="8" width="3" height="1" fill="#b4b8bc"/><rect x="0" y="10" width="3" height="1" fill="#b4b8bc"/><rect x="0" y="12" width="3" height="1" fill="#b4b8bc"/><rect x="0" y="14" width="3" height="1" fill="#b4b8bc"/></svg><svg class="a" style="left:810px;top:410px;" width="17" height="16" viewBox="0 0 17 16"><path d="M3.5 0.5 H11 L14.5 4 V15.5 H3.5Z" fill="#f2f2f2" stroke="#b0b0b0"/><path d="M0.5 6 H8 V15.5 H0.5Z" fill="#e6e6e6" stroke="#b8b8b8"/><path d="M9 9 L12 13 L16 9" stroke="#c0c0c0" stroke-width="1.8" fill="none"/></svg><div class="t" style="left:830.00px;top:410px;font-size:12px;line-height:16px;color:#a8a8a8;transform:scaleX(0.9755);">Descargar</div><svg class="a" style="left:889px;top:417px;" width="7" height="4" viewBox="0 0 7 4"><path d="M0 0 H6 L3 3Z" fill="#c0c0c0"/></svg><div class="a" style="left:903px;top:408px;width:1px;height:22px;background:#c5c8cc;box-shadow:1px 0 0 #fff"></div><svg class="a" style="left:909px;top:410px;" width="17" height="16" viewBox="0 0 17 16"><rect x="0.5" y="3.5" width="12" height="12" fill="#f4f4f4" stroke="#b8b8b8"/><path d="M5 11 L14 2 L16 4 L7 13 L4 14Z" fill="#d8d8d8" stroke="#a8a8a8"/></svg><div class="t" style="left:930.00px;top:410px;font-size:12px;line-height:16px;color:#a8a8a8;transform:scaleX(0.9570);">Editar</div><svg class="a" style="left:967px;top:417px;" width="7" height="4" viewBox="0 0 7 4"><path d="M0 0 H6 L3 3Z" fill="#c0c0c0"/></svg><svg class="a" style="left:981px;top:411px;" width="14" height="14" viewBox="0 0 14 14"><path d="M2 2 L12 12 M12 2 L2 12" stroke="#b0b0b0" stroke-width="3.2"/></svg><svg class="a" style="left:1003px;top:410px;" width="16" height="16" viewBox="0 0 16 16"><rect x="0.5" y="8.5" width="14" height="7" fill="#f4f4f4" stroke="#b8b8b8"/><path d="M6 12 L13 2 L15 3.5 L8 13Z" fill="#e0e0e0" stroke="#a8a8a8"/></svg><svg class="a" style="left:1026px;top:410px;" width="16" height="16" viewBox="0 0 16 16"><path d="M0.5 0.5 H8 L11.5 4 V15.5 H0.5Z" fill="#f4f4f4" stroke="#b8b8b8"/><rect x="7.5" y="8.5" width="8" height="7" fill="#f4f4f4" stroke="#b8b8b8"/><path d="M9 12 L11 14 L14 10" stroke="#b0b0b0" fill="none"/></svg><div class="t" style="left:1047.00px;top:410px;font-size:12px;line-height:16px;color:#a8a8a8;transform:scaleX(0.9646);">Propiedades</div><div class="a" style="left:1120px;top:408px;width:1px;height:22px;background:#c5c8cc;box-shadow:1px 0 0 #fff"></div><svg class="a" style="left:1126px;top:409px;" width="17" height="17" viewBox="0 0 17 17"><path d="M0.5 6.5 H6 L7.5 8 H14.5 V16.5 H0.5Z" fill="#e9c24a" stroke="#b8902a"/><path d="M0.5 9.5 H14.5 V16.5 H0.5Z" fill="#f5d769" stroke="#c29a30"/><circle cx="13" cy="4" r="3" fill="#fff" stroke="#5a8ad8" stroke-width="1.3" stroke-dasharray="1.5 1"/></svg><div class="t" style="left:1148.00px;top:410px;font-size:12px;line-height:16px;color:#000;transform:scaleX(0.9513);">Nuevo</div><svg class="a" style="left:1187px;top:417px;" width="7" height="4" viewBox="0 0 7 4"><path d="M0 0 H6 L3 3Z" fill="#222"/></svg><svg class="a" style="left:1203px;top:410px;" width="3" height="15" viewBox="0 0 3 15"><rect x="0" y="0" width="3" height="1" fill="#b4b8bc"/><rect x="0" y="2" width="3" height="1" fill="#b4b8bc"/><rect x="0" y="4" width="3" height="1" fill="#b4b8bc"/><rect x="0" y="6" width="3" height="1" fill="#b4b8bc"/><rect x="0" y="8" width="3" height="1" fill="#b4b8bc"/><rect x="0" y="10" width="3" height="1" fill="#b4b8bc"/><rect x="0" y="12" width="3" height="1" fill="#b4b8bc"/><rect x="0" y="14" width="3" height="1" fill="#b4b8bc"/></svg><svg class="a" style="left:1210px;top:410px;" width="16" height="16" viewBox="0 0 16 16"><rect x="0.5" y="0.5" width="15" height="15" fill="#fff" stroke="#1f3f8f" stroke-width="1.2"/><path d="M8 3 V13 M3 8 H13" stroke="#2a5ab8" stroke-width="2"/></svg><svg class="a" style="left:1233px;top:410px;" width="16" height="16" viewBox="0 0 16 16"><rect x="0.5" y="0.5" width="15" height="15" fill="#f8f8f8" stroke="#c0c0c0"/><path d="M3 8 H13" stroke="#c0c0c0" stroke-width="2"/></svg><svg class="a" style="left:1256px;top:410px;" width="16" height="16" viewBox="0 0 16 16"><rect x="0.5" y="0.5" width="15" height="15" fill="#fff" stroke="#1f3f8f" stroke-width="1.2"/><path d="M3 3 H13 L8 13Z" fill="none" stroke="#2a4a8a" stroke-width="1.6"/><path d="M3 3 H13" stroke="#2a4a8a" stroke-width="2"/></svg><div class="a" style="left:799px;top:431px;width:535px;height:21px;background:#bfcedd"></div><div class="t" style="left:804.00px;top:434px;font-size:12px;line-height:16px;color:#3c4a58;transform:scaleX(1.0422);">/incoming/</div><div class="a" style="left:799px;top:452px;width:535px;height:463px;background:#fff;border:1px solid #828790;box-sizing:border-box"></div><div class="a" style="left:800px;top:453px;width:533px;height:24px;background:linear-gradient(#ffffff 0%,#ffffff 45%,#f3f4f6 46%,#f1f2f4 100%);border-bottom:1px solid #d5d5d5;box-sizing:border-box"></div><div class="a" style="left:801px;top:453px;width:150px;height:24px;background:linear-gradient(#f4fafd 0%,#eef7fc 45%,#ddeff9 46%,#cde7f6 100%);border:1px solid #a5d2ec;border-top:none;box-sizing:border-box"></div><svg class="a" style="left:871px;top:454px;" width="9" height="5" viewBox="0 0 9 5"><path d="M0.5 4.5 L4.5 0.5 L8.5 4.5" stroke="#6aa4d0" fill="none" stroke-width="1.2"/></svg><div class="a" style="left:951px;top:454px;width:1px;height:22px;background:#e3e6ea"></div><div class="t" style="left:807.00px;top:458px;font-size:12px;line-height:16px;color:#1e1e1e;transform:scaleX(1.1012);">Nombre</div><div class="a" style="left:1020px;top:454px;width:1px;height:22px;background:#e3e6ea"></div><div class="t" style="left:968.00px;top:458px;font-size:12px;line-height:16px;color:#1e1e1e;transform:scaleX(1.1009);">Tamaño</div><div class="a" style="left:1170px;top:454px;width:1px;height:22px;background:#e3e6ea"></div><div class="t" style="left:1026.00px;top:458px;font-size:12px;line-height:16px;color:#1e1e1e;transform:scaleX(0.9305);">Modificado</div><div class="a" style="left:1249px;top:454px;width:1px;height:22px;background:#e3e6ea"></div><div class="t" style="left:1176.00px;top:458px;font-size:12px;line-height:16px;color:#1e1e1e;transform:scaleX(0.9598);">Permisos</div><div class="a" style="left:1312px;top:454px;width:1px;height:22px;background:#e3e6ea"></div><div class="t" style="left:1255.00px;top:458px;font-size:12px;line-height:16px;color:#1e1e1e;">Propiet...</div><div class="a" style="left:1332px;top:454px;width:1px;height:22px;background:#e3e6ea"></div><div class="a" style="left:951px;top:477px;width:1px;height:437px;background:#f0f1f4"></div><div class="a" style="left:1020px;top:477px;width:1px;height:437px;background:#f0f1f4"></div><div class="a" style="left:1170px;top:477px;width:1px;height:437px;background:#f0f1f4"></div><div class="a" style="left:1249px;top:477px;width:1px;height:437px;background:#f0f1f4"></div><div class="a" style="left:1312px;top:477px;width:1px;height:437px;background:#f0f1f4"></div><svg class="a" style="left:806px;top:479px;" width="14" height="16" viewBox="0 0 14 16"><path d="M1 1 H9 L13 4 V15 H1Z" fill="#f0d070" stroke="#c9a040"/><path d="M6 2 V14" stroke="#d8b450"/><path d="M4 8 L1.5 10.5 L4 13 M2 10.5 H8 V6" stroke="#222" stroke-width="1.3" fill="none"/></svg><div class="t" style="left:824.00px;top:480px;font-size:12px;line-height:16px;color:#000;">..</div><svg class="a" style="left:805px;top:498px;" width="17" height="16" viewBox="0 0 17 16"><path d="M4.5 3.5 H12 L15.5 7 V15.5 H4.5Z" fill="#f2f6fb" stroke="#5a78a8"/><rect x="10" y="10" width="3" height="3" fill="#2a5ab8"/><rect x="0.5" y="0.5" width="9" height="9" fill="#e6f4e0" stroke="#2f7f2f"/><path d="M2 2 L8 8 M8 2 L2 8" stroke="#2f8f2f" stroke-width="1.8"/></svg><div class="t" style="left:824.00px;top:499px;font-size:12px;line-height:16px;color:#000;transform:scaleX(0.9675);">ColunOnline.CSV</div><div class="t" style="left:990.00px;top:499px;font-size:12px;line-height:16px;color:#000;transform:scaleX(0.8841);">2 KB</div><div class="t" style="left:1027.00px;top:499px;font-size:12px;line-height:16px;color:#000;transform:scaleX(0.9243);">07-08-2020 15:51:45</div><div class="t" style="left:1177.00px;top:499px;font-size:12px;line-height:16px;color:#000;transform:scaleX(1.1074);">rw-r--r--</div><div class="t" style="left:1256.00px;top:499px;font-size:12px;line-height:16px;color:#000;transform:scaleX(0.8990);">1004</div><div class="a" style="left:799px;top:937px;width:535px;height:1px;background:#dcdcdc"></div><div class="a" style="left:260px;top:937px;width:1074px;height:19px;background:#f0f0f0"></div><div class="a" style="left:260px;top:938px;width:852px;height:18px;border-left:1px solid #e0e0e0;border-top:1px solid #e0e0e0;box-sizing:border-box"></div><div class="a" style="left:1115px;top:938px;width:32px;height:18px;border-left:1px solid #e0e0e0;border-top:1px solid #e0e0e0;box-sizing:border-box"></div><div class="a" style="left:1149px;top:938px;width:68px;height:18px;border-left:1px solid #e0e0e0;border-top:1px solid #e0e0e0;box-sizing:border-box"></div><div class="a" style="left:1220px;top:938px;width:32px;height:18px;border-left:1px solid #e0e0e0;border-top:1px solid #e0e0e0;box-sizing:border-box"></div><div class="a" style="left:1255px;top:938px;width:78px;height:18px;border-left:1px solid #e0e0e0;border-top:1px solid #e0e0e0;box-sizing:border-box"></div><svg class="a" style="left:1123px;top:939px;" width="16" height="17" viewBox="0 0 16 17"><path d="M4 8 V5 C4 1 12 1 12 5 V8" stroke="#b4b4b4" stroke-width="2" fill="none"/><rect x="2" y="8" width="12" height="8" rx="1" fill="#c4c4c4"/><rect x="7" y="10" width="2" height="3" fill="#999"/></svg><div class="t" style="left:1173.00px;top:938px;font-size:12px;line-height:16px;color:#000;transform:scaleX(0.8824);">FTP</div><svg class="a" style="left:1226px;top:939px;" width="17" height="17" viewBox="0 0 17 17"><rect x="1" y="2" width="11" height="9" fill="#d0d0d0" stroke="#aaa"/><path d="M2 5 H11 M2 8 H11" stroke="#eee"/><path d="M13 2 V14 M9 15 H15 M12 11 L12 15" stroke="#b0b0b0" stroke-width="1.6"/></svg><div class="t" style="left:1278.00px;top:938px;font-size:12px;line-height:16px;color:#000;transform:scaleX(0.8741);">0:03:47</div><div class="a" style="left:480px;top:529px;width:474px;height:473px;background:linear-gradient(#a9c1dc 0px,#b9cfe6 14px,#c3d7ec 24px,#dce7f3 25px,#dce7f3);border:1px solid #1c2b3a;border-radius:6px 6px 0 0;box-sizing:border-box"></div><div class="a" style="left:481px;top:1000px;width:472px;height:1px;background:#5ab0c8"></div><div class="a" style="left:951px;top:540px;width:1px;height:460px;background:#6ab8d0"></div><div class="t" style="left:487.00px;top:535px;font-size:12px;line-height:16px;color:#000;">Manteniendo el directorio remoto actualizado ...</div><div class="a" style="left:885px;top:534px;width:31px;height:17px;background:linear-gradient(rgba(255,255,255,0.35),rgba(255,255,255,0.1) 50%,rgba(0,0,0,0.03) 51%,rgba(255,255,255,0.2));border:1px solid #7c8c9e;border-radius:3px;box-sizing:border-box"></div><svg class="a" style="left:895.5px;top:535.5px;" width="10" height="14" viewBox="0 0 10 14"><path d="M2 4.5 C2 1 8 1 8 4.5 C8 7 5 7 5 9.5" stroke="#2a3a4a" stroke-width="3.6" fill="none" stroke-linecap="round"/><circle cx="5" cy="12" r="1.9" fill="#2a3a4a"/><path d="M2 4.5 C2 1 8 1 8 4.5 C8 7 5 7 5 9.5" stroke="#fff" stroke-width="1.8" fill="none" stroke-linecap="round"/><circle cx="5" cy="12" r="1" fill="#fff"/></svg><div class="a" style="left:918px;top:534px;width:31px;height:17px;background:linear-gradient(#e8a18f,#d46a50 50%,#c34a2c 51%,#e08a6a);border:1px solid #5a2a22;border-radius:3px;box-sizing:border-box"></div><svg class="a" style="left:927.5px;top:537.5px;" width="12" height="10" viewBox="0 0 12 10"><path d="M2.5 2 L9.5 8 M9.5 2 L2.5 8" stroke="#5a2a22" stroke-width="3.8" stroke-linecap="round"/><path d="M2.5 2 L9.5 8 M9.5 2 L2.5 8" stroke="#fff" stroke-width="1.8" stroke-linecap="round"/></svg><div class="a" style="left:482px;top:554px;width:469px;height:445px;background:#f0f0f0"></div><div class="a" style="left:492px;top:567px;width:451px;height:110px;border:1px solid #d5dfe5;border-radius:3px;box-sizing:border-box;box-shadow:inset 1px 1px 0 #fff"></div><div class="a" style="left:497px;top:560px;width:55px;height:14px;background:#f0f0f0"></div><div class="t" style="left:498.00px;top:559px;font-size:12px;line-height:16px;color:#000;transform:scaleX(0.8893);">Directorios</div><svg class="a" style="left:503px;top:582px;" width="32" height="32" viewBox="0 0 32 32"><path d="M1 4 H8 L10 6 H17 V16 H1Z" fill="#eec84a" stroke="#c49a2a"/><path d="M1 7 H17 V16 H1Z" fill="#f7e07a" stroke="#c9a330"/><path d="M14 17 H21 L23 19 H30 V30 H14Z" fill="#eec84a" stroke="#c49a2a"/><path d="M14 20 H30 V30 H14Z" fill="#f7e07a" stroke="#c9a330"/><path d="M11 9 C13 3 22 2 26 7 L28 5 V13 H20 L23 10 C20 7 15 7 13 11Z" fill="#3ab83a" stroke="#1f8a1f" stroke-width="0.8"/><path d="M20 22 C18 28 9 29 5 24 L3 26 V18 H11 L8 21 C11 24 16 24 18 20Z" fill="#d82828" stroke="#a01818" stroke-width="0.8"/></svg><div class="t" style="left:539.00px;top:578px;font-size:12px;line-height:16px;color:#a0a0a0;transform:scaleX(0.8750);">Buscar cambios en el directorio local</div><div class="a" style="left:540px;top:595px;width:312px;height:21px;background:#fff;border:1px solid #adadad;border-radius:2px;box-sizing:border-box"></div><div class="a" style="left:542px;top:597px;width:290px;height:17px;background:#f0f0f0"></div><div class="t" style="left:543.00px;top:598px;font-size:12px;line-height:16px;color:#8d8d8d;transform:scaleX(0.9103);">D:\Energix</div><svg class="a" style="left:839px;top:604px;" width="9" height="5" viewBox="0 0 9 5"><path d="M0 0 H8 L4 4Z" fill="#a8a8a8"/></svg><div class="a" style="left:859px;top:594px;width:73px;height:23px;background:#f4f4f4;border:1px solid #adadad;border-radius:3px;box-sizing:border-box;box-shadow:inset 0 0 0 1px #fcfcfc"></div><div class="t" style="left:867.50px;top:598px;font-size:12px;line-height:16px;color:#8d8d8d;transform:scaleX(0.9163);">Examinar...</div><div class="t" style="left:540.00px;top:627px;font-size:12px;line-height:16px;color:#a0a0a0;transform:scaleX(0.9097);">...y replicarlos en el directorio remoto</div><div class="a" style="left:540px;top:644px;width:393px;height:21px;background:#fff;border:1px solid #adadad;border-radius:2px;box-sizing:border-box"></div><div class="a" style="left:542px;top:646px;width:371px;height:17px;background:#f0f0f0"></div><div class="t" style="left:542.00px;top:646px;font-size:12px;line-height:16px;color:#8d8d8d;transform:scaleX(0.8956);">/incoming</div><svg class="a" style="left:920px;top:653px;" width="9" height="5" viewBox="0 0 9 5"><path d="M0 0 H8 L4 4Z" fill="#a8a8a8"/></svg><div class="a" style="left:492px;top:691px;width:451px;height:110px;border:1px solid #d5dfe5;border-radius:3px;box-sizing:border-box;box-shadow:inset 1px 1px 0 #fff"></div><div class="a" style="left:497px;top:684px;width:107px;height:14px;background:#f0f0f0"></div><div class="t" style="left:498.00px;top:683px;font-size:12px;line-height:16px;color:#000;transform:scaleX(0.8626);">Opciones de sincronía</div><div class="a" style="left:502px;top:707px;width:13px;height:13px;background:linear-gradient(135deg,#f4f4f4,#fcfcfc);border:1px solid #c2c2c2;box-sizing:border-box"></div><div class="t" style="left:517.00px;top:705px;font-size:12px;line-height:16px;color:#8d8d8d;transform:scaleX(0.8647);">Eliminar archivos</div><div class="a" style="left:502px;top:731px;width:13px;height:13px;background:linear-gradient(135deg,#f4f4f4,#fcfcfc);border:1px solid #c2c2c2;box-sizing:border-box"></div><svg class="a" style="left:504px;top:733px;" width="9" height="9" viewBox="0 0 9 9"><path d="M1 4 L3.5 7 L8 0.5" stroke="#b0b0b0" stroke-width="1.6" fill="none"/></svg><div class="t" style="left:517.00px;top:729px;font-size:12px;line-height:16px;color:#8d8d8d;transform:scaleX(0.9026);">Actualizar subdirectorios</div><div class="a" style="left:502px;top:755px;width:13px;height:13px;background:linear-gradient(135deg,#f4f4f4,#fcfcfc);border:1px solid #c2c2c2;box-sizing:border-box"></div><div class="t" style="left:517.00px;top:753px;font-size:12px;line-height:16px;color:#8d8d8d;transform:scaleX(0.9060);">Continuar a pesar de errores</div><div class="a" style="left:502px;top:779px;width:13px;height:13px;background:linear-gradient(135deg,#f4f4f4,#fcfcfc);border:1px solid #c2c2c2;box-sizing:border-box"></div><div class="t" style="left:517.00px;top:777px;font-size:12px;line-height:16px;color:#8d8d8d;transform:scaleX(0.8789);">Usar estas opciones siempre</div><div class="a" style="left:720px;top:707px;width:13px;height:13px;background:linear-gradient(135deg,#f4f4f4,#fcfcfc);border:1px solid #c2c2c2;box-sizing:border-box"></div><div class="t" style="left:735.00px;top:705px;font-size:12px;line-height:16px;color:#8d8d8d;transform:scaleX(0.8964);">Solo archivos existentes</div><div class="a" style="left:720px;top:731px;width:13px;height:13px;background:linear-gradient(135deg,#f4f4f4,#fcfcfc);border:1px solid #c2c2c2;box-sizing:border-box"></div><div class="t" style="left:735.00px;top:729px;font-size:12px;line-height:16px;color:#8d8d8d;transform:scaleX(0.8717);">Solo archivos seleccionados</div><div class="a" style="left:720px;top:755px;width:13px;height:13px;background:linear-gradient(135deg,#f4f4f4,#fcfcfc);border:1px solid #c2c2c2;box-sizing:border-box"></div><svg class="a" style="left:722px;top:757px;" width="9" height="9" viewBox="0 0 9 9"><path d="M1 4 L3.5 7 L8 0.5" stroke="#b0b0b0" stroke-width="1.6" fill="none"/></svg><div class="t" style="left:735.00px;top:753px;font-size:12px;line-height:16px;color:#8d8d8d;transform:scaleX(0.8568);">Sincronizar al iniciar</div><div class="a" style="left:492px;top:815px;width:451px;height:41px;border:1px solid #d5dfe5;border-radius:3px;box-sizing:border-box;box-shadow:inset 1px 1px 0 #fff"></div><div class="a" style="left:497px;top:808px;width:129px;height:14px;background:#f0f0f0"></div><div class="t" style="left:498.00px;top:807px;font-size:12px;line-height:16px;color:#000;transform:scaleX(0.8923);">Opciones de transferencia</div><div class="t" style="left:498.00px;top:822px;font-size:12px;line-height:16px;color:#a0a0a0;transform:scaleX(0.8956);">Tipo de transferencia: Binaria</div><div class="a" style="left:492px;top:867px;width:159px;height:23px;background:#f2f2f2;border:1px solid #adadad;border-radius:3px;box-sizing:border-box"></div><div class="t" style="left:495.00px;top:872px;font-size:12px;line-height:16px;color:#8d8d8d;transform:scaleX(0.9128);">Opciones de transferencia...</div><div class="a" style="left:636px;top:870px;width:1px;height:17px;background:#9a9a9a"></div><svg class="a" style="left:639px;top:877px;" width="9" height="5" viewBox="0 0 9 5"><path d="M0 0 H8 L4 4Z" fill="#a8a8a8"/></svg><div class="a" style="left:667px;top:867px;width:87px;height:23px;background:linear-gradient(#f2f2f2,#ebebeb 50%,#dddddd 51%,#cfcfcf);border:1px solid #3c7fb1;border-radius:3px;box-sizing:border-box;box-shadow:inset 0 0 0 1.5px #8ed2f4"></div><div class="t" style="left:691.50px;top:872px;font-size:12px;line-height:16px;color:#000;transform:scaleX(0.8901);">Detener</div><div class="a" style="left:761px;top:867px;width:86px;height:23px;background:linear-gradient(#f2f2f2,#ebebeb 50%,#dddddd 51%,#cfcfcf);border:1px solid #707070;border-radius:3px;box-sizing:border-box"></div><div class="t" style="left:774.00px;top:872px;font-size:12px;line-height:16px;color:#000;transform:scaleX(0.8571);">Minimizar</div><div class="a" style="left:831px;top:869px;width:1px;height:19px;background:#555"></div><svg class="a" style="left:834px;top:875px;" width="10" height="6" viewBox="0 0 10 6"><path d="M0 0 H10 L5 5.5Z" fill="#000"/></svg><div class="a" style="left:855px;top:867px;width:86px;height:23px;background:linear-gradient(#f2f2f2,#ebebeb 50%,#dddddd 51%,#cfcfcf);border:1px solid #707070;border-radius:3px;box-sizing:border-box"></div><div class="t" style="left:881.50px;top:872px;font-size:12px;line-height:16px;color:#000;transform:scaleX(0.9169);">Ayuda</div><div class="a" style="left:491px;top:901px;width:452px;height:90px;background:#fff;border:1px solid #828790;box-sizing:border-box"></div><div class="t" style="left:499.00px;top:904px;font-size:12px;line-height:16px;color:#000;transform:scaleX(0.9419);">15:58:45</div><div class="t" style="left:553.00px;top:904px;font-size:12px;line-height:16px;color:#000;transform:scaleX(0.8820);">Se ha subido el archivo «D:\Energix\ColunOnline.CSV».</div><div class="t" style="left:499.00px;top:921px;font-size:12px;line-height:16px;color:#000;transform:scaleX(0.9419);">15:58:46</div><div class="t" style="left:553.00px;top:921px;font-size:12px;line-height:16px;color:#000;transform:scaleX(0.9029);">Explorando «D:\Energix» en busca de subdirectorios...</div><div class="t" style="left:499.00px;top:938px;font-size:12px;line-height:16px;color:#000;transform:scaleX(0.9419);">15:58:46</div><div class="t" style="left:553.00px;top:938px;font-size:12px;line-height:16px;color:#000;transform:scaleX(0.9005);">Observando cambios en 1 directorios...</div><div class="a" style="left:0px;top:1011px;width:1680px;height:39px;background:linear-gradient(#95a4b6 0px,#8495aa 3px,#8192a8 100%);border-top:1px solid #c9d3de;box-sizing:border-box"></div><svg class="a" style="left:7px;top:1010px;" width="40" height="40" viewBox="0 0 40 40"><defs><linearGradient id="orb" x1="0" y1="0" x2="0" y2="1"><stop offset="0" stop-color="#d0dde6"/><stop offset="0.35" stop-color="#7fa2ba"/><stop offset="0.47" stop-color="#2a5a80"/><stop offset="0.5" stop-color="#0a3a6a"/><stop offset="0.8" stop-color="#0a68a8"/><stop offset="1" stop-color="#18d8ff"/></linearGradient></defs><circle cx="20" cy="21" r="18" fill="url(#orb)" stroke="#1a3048" stroke-width="1.2"/><circle cx="20" cy="21" r="17" fill="none" stroke="#a8c4da" stroke-width="0.8" opacity="0.8"/><path d="M11 12 Q15 10 20 12 L18.5 20 Q14 18.5 9.5 20Z" fill="#f06020"/><path d="M21 12.5 Q26 14.5 31 12.5 L29 21 Q25 23 19.5 21Z" fill="#8cc43a"/><path d="M9 21.5 Q14 20 18 22 L16.5 30 Q12 28.5 7.5 30Z" fill="#3aa8f0"/><path d="M19.5 22.5 Q24.5 24.5 29 22.5 L27.5 31 Q23.5 33 18 31Z" fill="#fcc820"/></svg><svg class="a" style="left:58px;top:1015px;" width="9" height="30" viewBox="0 0 9 30"><rect x="0" y="0" width="2" height="2" fill="#2c3846"/><rect x="1" y="1" width="1" height="1" fill="#c0ccd8"/><rect x="0" y="4" width="2" height="2" fill="#2c3846"/><rect x="1" y="5" width="1" height="1" fill="#c0ccd8"/><rect x="0" y="8" width="2" height="2" fill="#2c3846"/><rect x="1" y="9" width="1" height="1" fill="#c0ccd8"/><rect x="0" y="12" width="2" height="2" fill="#2c3846"/><rect x="1" y="13" width="1" height="1" fill="#c0ccd8"/><rect x="0" y="16" width="2" height="2" fill="#2c3846"/><rect x="1" y="17" width="1" height="1" fill="#c0ccd8"/><rect x="0" y="20" width="2" height="2" fill="#2c3846"/><rect x="1" y="21" width="1" height="1" fill="#c0ccd8"/><rect x="0" y="24" width="2" height="2" fill="#2c3846"/><rect x="1" y="25" width="1" height="1" fill="#c0ccd8"/><rect x="0" y="28" width="2" height="2" fill="#2c3846"/><rect x="1" y="29" width="1" height="1" fill="#c0ccd8"/><rect x="3" y="0" width="2" height="2" fill="#2c3846"/><rect x="4" y="1" width="1" height="1" fill="#c0ccd8"/><rect x="3" y="4" width="2" height="2" fill="#2c3846"/><rect x="4" y="5" width="1" height="1" fill="#c0ccd8"/><rect x="3" y="8" width="2" height="2" fill="#2c3846"/><rect x="4" y="9" width="1" height="1" fill="#c0ccd8"/><rect x="3" y="12" width="2" height="2" fill="#2c3846"/><rect x="4" y="13" width="1" height="1" fill="#c0ccd8"/><rect x="3" y="16" width="2" height="2" fill="#2c3846"/><rect x="4" y="17" width="1" height="1" fill="#c0ccd8"/><rect x="3" y="20" width="2" height="2" fill="#2c3846"/><rect x="4" y="21" width="1" height="1" fill="#c0ccd8"/><rect x="3" y="24" width="2" height="2" fill="#2c3846"/><rect x="4" y="25" width="1" height="1" fill="#c0ccd8"/><rect x="3" y="28" width="2" height="2" fill="#2c3846"/><rect x="4" y="29" width="1" height="1" fill="#c0ccd8"/><rect x="6" y="0" width="2" height="2" fill="#2c3846"/><rect x="7" y="1" width="1" height="1" fill="#c0ccd8"/><rect x="6" y="4" width="2" height="2" fill="#2c3846"/><rect x="7" y="5" width="1" height="1" fill="#c0ccd8"/><rect x="6" y="8" width="2" height="2" fill="#2c3846"/><rect x="7" y="9" width="1" height="1" fill="#c0ccd8"/><rect x="6" y="12" width="2" height="2" fill="#2c3846"/><rect x="7" y="13" width="1" height="1" fill="#c0ccd8"/><rect x="6" y="16" width="2" height="2" fill="#2c3846"/><rect x="7" y="17" width="1" height="1" fill="#c0ccd8"/><rect x="6" y="20" width="2" height="2" fill="#2c3846"/><rect x="7" y="21" width="1" height="1" fill="#c0ccd8"/><rect x="6" y="24" width="2" height="2" fill="#2c3846"/><rect x="7" y="25" width="1" height="1" fill="#c0ccd8"/><rect x="6" y="28" width="2" height="2" fill="#2c3846"/><rect x="7" y="29" width="1" height="1" fill="#c0ccd8"/></svg><svg class="a" style="left:1469px;top:1015px;" width="9" height="30" viewBox="0 0 9 30"><rect x="0" y="0" width="2" height="2" fill="#2c3846"/><rect x="1" y="1" width="1" height="1" fill="#c0ccd8"/><rect x="0" y="4" width="2" height="2" fill="#2c3846"/><rect x="1" y="5" width="1" height="1" fill="#c0ccd8"/><rect x="0" y="8" width="2" height="2" fill="#2c3846"/><rect x="1" y="9" width="1" height="1" fill="#c0ccd8"/><rect x="0" y="12" width="2" height="2" fill="#2c3846"/><rect x="1" y="13" width="1" height="1" fill="#c0ccd8"/><rect x="0" y="16" width="2" height="2" fill="#2c3846"/><rect x="1" y="17" width="1" height="1" fill="#c0ccd8"/><rect x="0" y="20" width="2" height="2" fill="#2c3846"/><rect x="1" y="21" width="1" height="1" fill="#c0ccd8"/><rect x="0" y="24" width="2" height="2" fill="#2c3846"/><rect x="1" y="25" width="1" height="1" fill="#c0ccd8"/><rect x="0" y="28" width="2" height="2" fill="#2c3846"/><rect x="1" y="29" width="1" height="1" fill="#c0ccd8"/><rect x="3" y="0" width="2" height="2" fill="#2c3846"/><rect x="4" y="1" width="1" height="1" fill="#c0ccd8"/><rect x="3" y="4" width="2" height="2" fill="#2c3846"/><rect x="4" y="5" width="1" height="1" fill="#c0ccd8"/><rect x="3" y="8" width="2" height="2" fill="#2c3846"/><rect x="4" y="9" width="1" height="1" fill="#c0ccd8"/><rect x="3" y="12" width="2" height="2" fill="#2c3846"/><rect x="4" y="13" width="1" height="1" fill="#c0ccd8"/><rect x="3" y="16" width="2" height="2" fill="#2c3846"/><rect x="4" y="17" width="1" height="1" fill="#c0ccd8"/><rect x="3" y="20" width="2" height="2" fill="#2c3846"/><rect x="4" y="21" width="1" height="1" fill="#c0ccd8"/><rect x="3" y="24" width="2" height="2" fill="#2c3846"/><rect x="4" y="25" width="1" height="1" fill="#c0ccd8"/><rect x="3" y="28" width="2" height="2" fill="#2c3846"/><rect x="4" y="29" width="1" height="1" fill="#c0ccd8"/><rect x="6" y="0" width="2" height="2" fill="#2c3846"/><rect x="7" y="1" width="1" height="1" fill="#c0ccd8"/><rect x="6" y="4" width="2" height="2" fill="#2c3846"/><rect x="7" y="5" width="1" height="1" fill="#c0ccd8"/><rect x="6" y="8" width="2" height="2" fill="#2c3846"/><rect x="7" y="9" width="1" height="1" fill="#c0ccd8"/><rect x="6" y="12" width="2" height="2" fill="#2c3846"/><rect x="7" y="13" width="1" height="1" fill="#c0ccd8"/><rect x="6" y="16" width="2" height="2" fill="#2c3846"/><rect x="7" y="17" width="1" height="1" fill="#c0ccd8"/><rect x="6" y="20" width="2" height="2" fill="#2c3846"/><rect x="7" y="21" width="1" height="1" fill="#c0ccd8"/><rect x="6" y="24" width="2" height="2" fill="#2c3846"/><rect x="7" y="25" width="1" height="1" fill="#c0ccd8"/><rect x="6" y="28" width="2" height="2" fill="#2c3846"/><rect x="7" y="29" width="1" height="1" fill="#c0ccd8"/></svg><svg class="a" style="left:89px;top:1014px;" width="32" height="32" viewBox="0 0 32 32"><rect x="1" y="1" width="29" height="29" rx="4" fill="#f3a857" stroke="#6a3210" stroke-width="2"/><path d="M13 8 H22 L26 12 V27 H13Z" fill="#f7d09c" stroke="#8a4a18"/><text x="3" y="16" font-size="6" fill="#c56a22" font-family="Liberation Mono">0010</text><text x="6" y="24" font-size="6" fill="#c56a22" font-family="Liberation Mono">1001</text></svg><svg class="a" style="left:150px;top:1014px;" width="34" height="34" viewBox="0 0 34 34"><path d="M2 6 H12 L14 9 H32 V30 H2Z" fill="#e9c35c" stroke="#b28a30"/><rect x="5" y="4" width="5" height="3" fill="#2db02d"/><rect x="13" y="6" width="5" height="3" fill="#d03030"/><rect x="20" y="8" width="5" height="3" fill="#3070d0"/><path d="M2 12 H32 V30 H2Z" fill="#f4dc8a"/><path d="M9 31 V21 H25 V31 M13 31 V25 H21 V31" stroke="#5aa6e0" stroke-width="3" fill="none"/></svg><div class="a" style="left:200px;top:1011px;width:158px;height:38px;background:linear-gradient(#a4b1c0 0%, #909fb1 50%, #8797aa 100%);border:1px solid #4a5868;border-radius:3px;box-sizing:border-box;box-shadow:inset 0 0 0 1px rgba(255,255,255,0.45)"></div><div class="a" style="left:362px;top:1011px;width:158px;height:38px;background:linear-gradient(#a4b1c0 0%, #909fb1 50%, #8797aa 100%);border:1px solid #4a5868;border-radius:3px;box-sizing:border-box;box-shadow:inset 0 0 0 1px rgba(255,255,255,0.45)"></div><div class="a" style="left:524px;top:1011px;width:158px;height:38px;background:linear-gradient(#e2e7ec 0%, #c8d0d8 45%, #b0bcc8 55%, #aab6c4 100%);border:1px solid #4a5868;border-radius:3px;box-sizing:border-box;box-shadow:inset 0 0 0 1px rgba(255,255,255,0.45)"></div><svg class="a" style="left:209px;top:1014px;" width="29" height="29" viewBox="0 0 46 46"><defs><linearGradient id="xlbg2" x1="0" y1="0" x2="1" y2="1"><stop offset="0" stop-color="#e6f2e2"/><stop offset="0.5" stop-color="#b8dcb0"/><stop offset="1" stop-color="#4faa4a"/></linearGradient><linearGradient id="xlx2" x1="0" y1="0" x2="1" y2="1"><stop offset="0" stop-color="#3a9a3a"/><stop offset="0.5" stop-color="#8ccc3a"/><stop offset="1" stop-color="#2a8a2a"/></linearGradient></defs><path d="M1 14 C1 6 7 1 15 1 H44 V44 H1Z" fill="url(#xlbg2)" stroke="#1f6a2a" stroke-width="2"/><path d="M6 7 H17 L24 18 L31 7 H36 L27 22 L35 36 H24 L19 28 L13 36 H5 L14 22Z" fill="#1f7a3a"/><path d="M6 7 H17 L35 36 H24Z" fill="url(#xlx2)"/><path d="M24 25 L46 32 L41 47 L4 43 V35Z" fill="#f6fbf4"/><path d="M26 31 L42 35 M25 36 L41 40 M24 41 L38 44 M10 38 L30 42" stroke="#8fc48a" stroke-width="1.6"/></svg><div class="t" style="left:245.00px;top:1022px;font-size:12px;line-height:16px;color:#fff;transform:scaleX(0.9900);text-shadow:0 0 6px rgba(0,0,0,0.35);">Microsoft Excel - ...</div><svg class="a" style="left:370px;top:1015px;" width="32" height="30" viewBox="0 0 32 30"><defs><linearGradient id="npb" x1="0" y1="0" x2="0.3" y2="1"><stop offset="0" stop-color="#d8f0f4"/><stop offset="0.4" stop-color="#8fd0e0"/><stop offset="1" stop-color="#3a9ab8"/></linearGradient></defs><path d="M26 3 L30 4 L31 27 L26 29Z" fill="#a08040"/><path d="M25 3 L28 4 L27 28 L20 29Z" fill="#f0f4f6" stroke="#c0c8cc" stroke-width="0.5"/><path d="M11 3 H26 L19 28 H1Z" fill="url(#npb)" stroke="#e8f4f8" stroke-width="0.8"/><path d="M12 2 H26" stroke="#444" stroke-width="2" stroke-dasharray="1.2 1"/></svg><div class="t" style="left:407.00px;top:1022px;font-size:12px;line-height:16px;color:#fff;transform:scaleX(0.8996);text-shadow:0 0 6px rgba(0,0,0,0.35);">SFTP_Usuario_Cla...</div><svg class="a" style="left:532px;top:1013px;" width="32" height="32" viewBox="0 0 50 50"><path d="M2 3 Q2 1 4 1 H20 L14 7 L22 15 L17 20 L9 12 L3 19 Q2 19 2 17Z" fill="#2a7af0"/><path d="M17 21 V13 C17 4 32 4 32 13 V21" fill="none" stroke="#c8c8c8" stroke-width="4.5"/><rect x="11" y="20.5" width="27" height="18" rx="1.5" fill="url(#wsbody)"/><path d="M47 29 V44 Q47 46 45 46 H30 L36 40 L27 31 L33 25 L41 34Z" fill="#18c018"/></svg><div class="t" style="left:569.00px;top:1022px;font-size:12px;line-height:16px;color:#fff;transform:scaleX(0.9774);text-shadow:0 0 6px rgba(0,0,0,0.35);">Energix - sftpchile...</div><div class="t" style="left:1487.00px;top:1020px;font-size:12px;line-height:16px;color:#fff;transform:scaleX(0.8746);">ES</div><svg class="a" style="left:1515px;top:1024px;" width="12" height="8" viewBox="0 0 12 8"><path d="M1 7 L6 2 L11 7Z" fill="#f4f6f8"/></svg><svg class="a" style="left:1536px;top:1020px;" width="20" height="20" viewBox="0 0 20 20"><path d="M3 2 V19" stroke="#fff" stroke-width="2"/><path d="M4 3 C8 1 12 5 16 3 V11 C12 13 8 9 4 11Z" fill="#f4f4f4" stroke="#666" stroke-width="0.6"/><circle cx="12" cy="14" r="5" fill="#d42a2a" stroke="#fff"/><path d="M10 12 L14 16 M14 12 L10 16" stroke="#fff" stroke-width="1.5"/></svg><svg class="a" style="left:1561px;top:1022px;" width="20" height="16" viewBox="0 0 20 16"><path d="M2 5 H6 L11 1 V15 L6 11 H2Z" fill="#f4f4f4" stroke="#555" stroke-width="0.8"/><path d="M13 5 Q15 8 13 11 M15 3 Q18.5 8 15 13" stroke="#f4f4f4" stroke-width="1.3" fill="none"/></svg><div class="t" style="left:1611.00px;top:1015px;font-size:12px;line-height:16px;color:#fff;transform:scaleX(0.9324);">16:02</div><div class="t" style="left:1595.00px;top:1031px;font-size:12px;line-height:16px;color:#fff;transform:scaleX(0.9448);">07-08-2020</div><div class="a" style="left:1664px;top:1011px;width:16px;height:39px;background:linear-gradient(90deg,#9aa8b8,#c3ccd6 50%,#8fa0b2);border-left:1px solid #5b6878;box-sizing:border-box"></div></body></html>
